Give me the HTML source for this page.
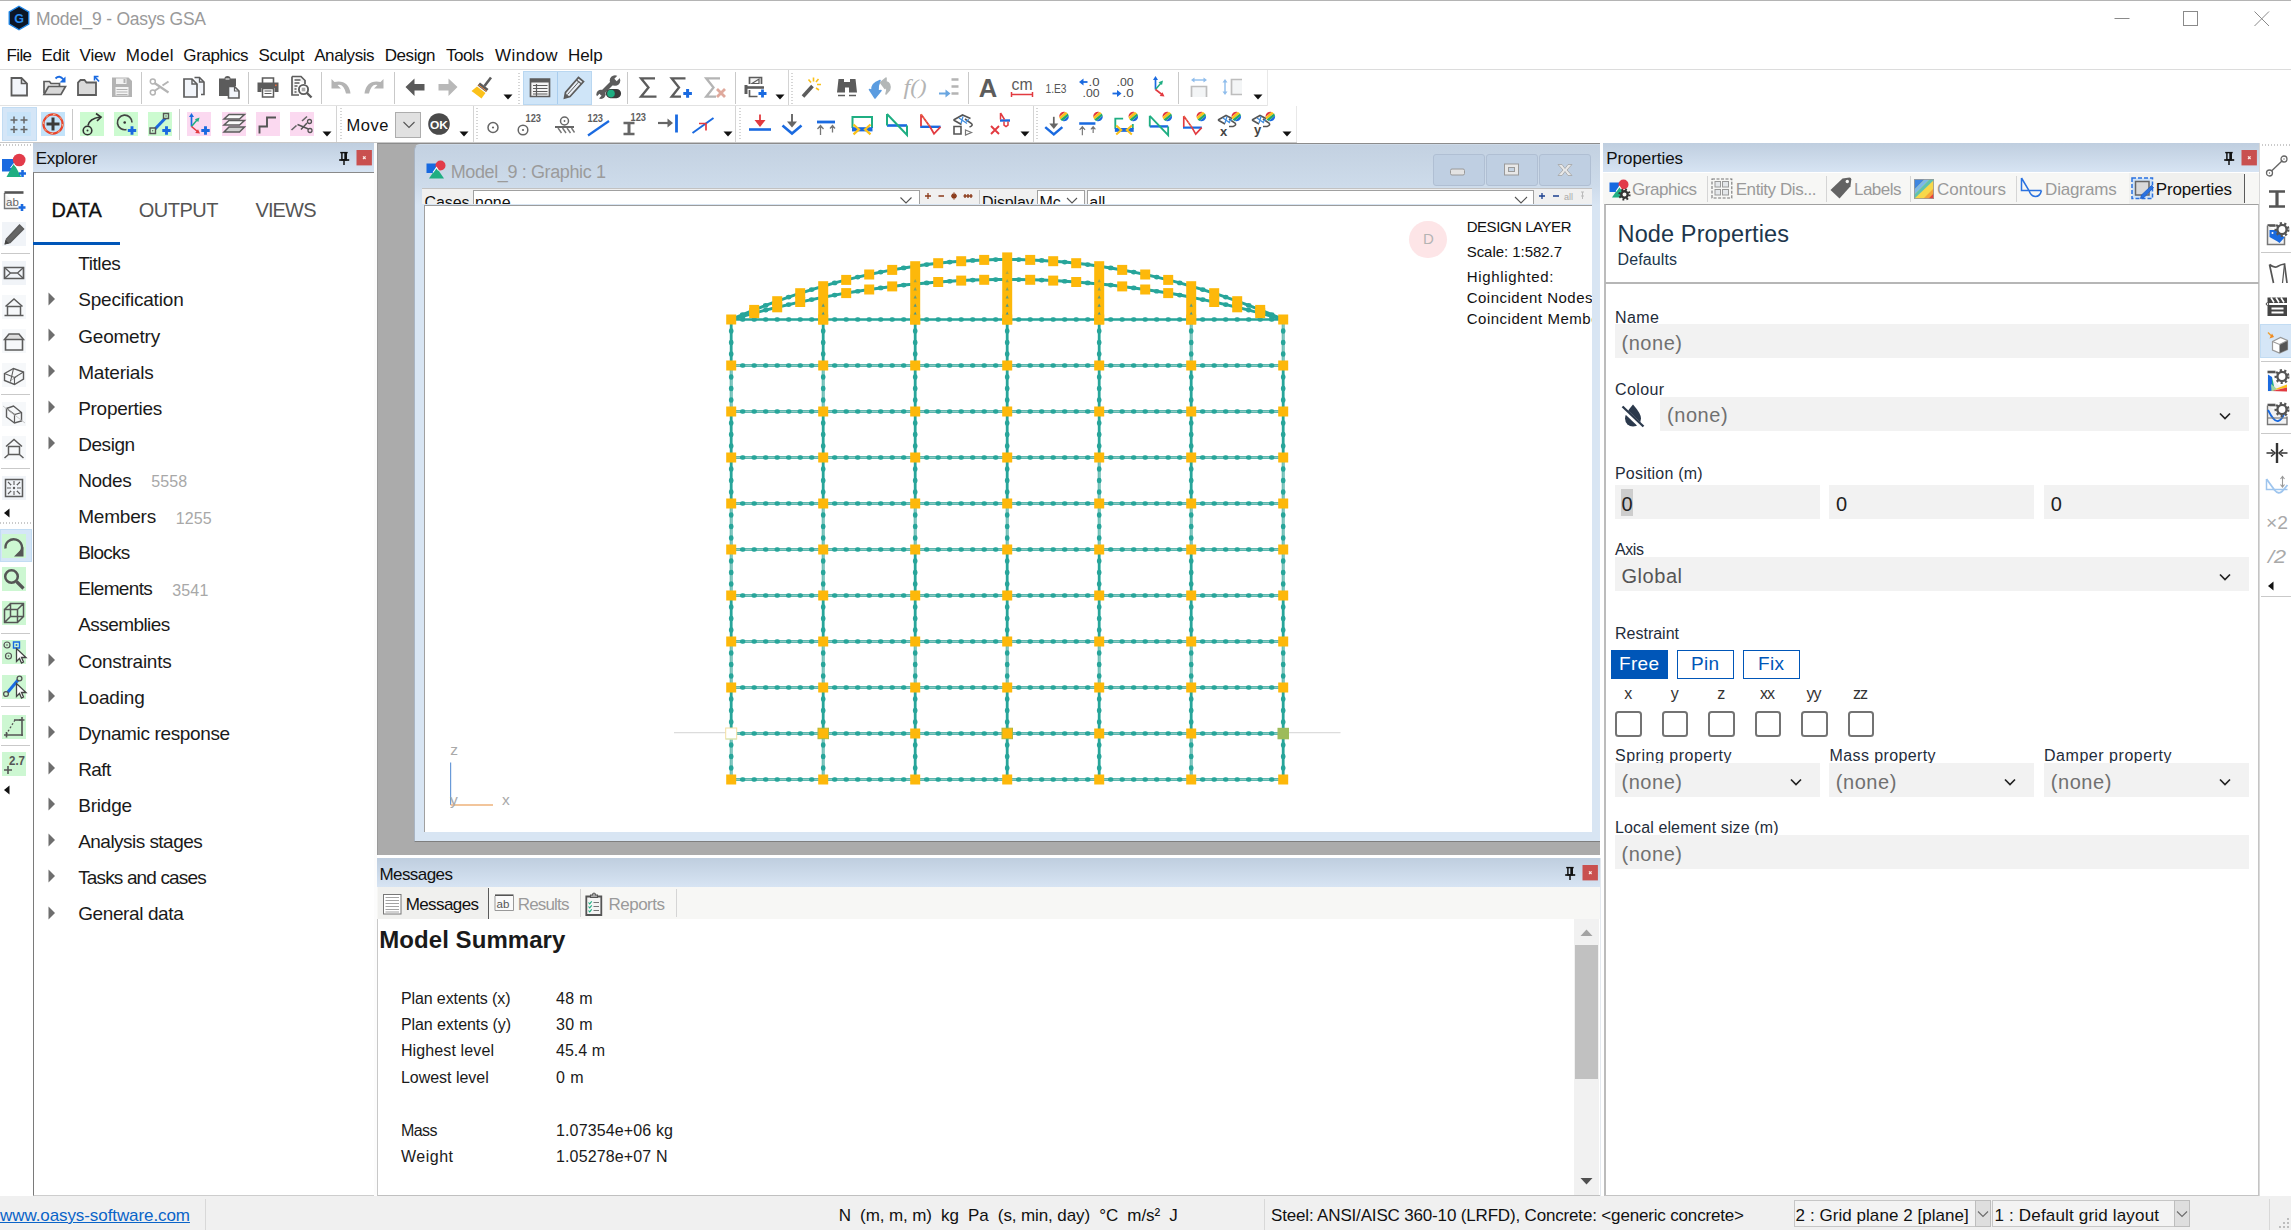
<!DOCTYPE html>
<html><head><meta charset="utf-8"><title>Model_9 - Oasys GSA</title>
<style>
html,body{margin:0;padding:0;background:#fff;}
body{width:2291px;height:1230px;position:relative;overflow:hidden;font-family:"Liberation Sans",sans-serif;}
body div{position:absolute;box-sizing:border-box;}
.t{position:absolute;white-space:pre;line-height:1;}
svg{position:absolute;overflow:visible;}
</style></head><body>
<div style="left:0px;top:0px;width:2291px;height:1px;background:#b4b4b4;"></div>
<span class="t " style="left:36.00px;top:11.00px;font-size:17.5px;color:#9a9a9a;letter-spacing:-0.227px;">Model_9 - Oasys GSA</span>
<svg style="left:2100px;top:0" width="191" height="40"><path d="M14.5 18.5H29.5" stroke="#8a8a8a" fill="none"/><rect x="83.5" y="11.5" width="14" height="14" stroke="#8a8a8a" fill="none"/><path d="M154.5 11.5L169 26M169 11.5L154.5 26" stroke="#8a8a8a" fill="none"/></svg>
<span class="t " style="left:6.60px;top:47.00px;font-size:17px;color:#111;letter-spacing:-0.664px;">File</span>
<span class="t " style="left:41.50px;top:47.00px;font-size:17px;color:#111;letter-spacing:-0.331px;">Edit</span>
<span class="t " style="left:79.60px;top:47.00px;font-size:17px;color:#111;letter-spacing:-0.180px;">View</span>
<span class="t " style="left:125.70px;top:47.00px;font-size:17px;color:#111;letter-spacing:0.375px;">Model</span>
<span class="t " style="left:183.30px;top:47.00px;font-size:17px;color:#111;letter-spacing:-0.389px;">Graphics</span>
<span class="t " style="left:258.40px;top:47.00px;font-size:17px;color:#111;letter-spacing:-0.229px;">Sculpt</span>
<span class="t " style="left:314.20px;top:47.00px;font-size:17px;color:#111;letter-spacing:-0.414px;">Analysis</span>
<span class="t " style="left:384.80px;top:47.00px;font-size:17px;color:#111;letter-spacing:-0.463px;">Design</span>
<span class="t " style="left:445.90px;top:47.00px;font-size:17px;color:#111;letter-spacing:-0.396px;">Tools</span>
<span class="t " style="left:495.00px;top:47.00px;font-size:17px;color:#111;letter-spacing:0.428px;">Window</span>
<span class="t " style="left:568.00px;top:47.00px;font-size:17px;color:#111;letter-spacing:-0.121px;">Help</span>
<div style="left:0px;top:69px;width:2291px;height:1px;background:#dcdcdc;"></div>
<div style="left:0px;top:105px;width:1267px;height:1px;background:#e2e2e2;"></div>
<div style="left:1267px;top:70px;width:1px;height:36px;background:#e8e8e8;"></div>
<div style="left:1296px;top:106px;width:1px;height:36px;background:#e8e8e8;"></div>
<div style="left:0px;top:142px;width:1297px;height:1px;background:#c8c8c8;"></div>
<div style="left:33px;top:143px;width:341px;height:29px;background:linear-gradient(#bfcedf,#d7e4f3);"></div>
<div style="left:33px;top:172px;width:341px;height:1024px;background:#fff;border-left:1px solid #7a7a7a;border-top:1px solid #8a8a8a;border-bottom:1px solid #cdcdcd;"></div>
<div style="left:374px;top:143px;width:3px;height:1053px;background:#fcfcfc;"></div>
<span class="t " style="left:35.70px;top:150.00px;font-size:17px;color:#111;letter-spacing:-0.243px;">Explorer</span>
<svg style="left:340.5px;top:150px" width="32" height="17" overflow="visible"><g transform="translate(-1.800,0.800)"><path d="M1 1.800h7.500" stroke="#111" stroke-width="1.400" fill="none"/><path d="M2.700 2v7h4.300V2" stroke="#111" stroke-width="1.500" fill="none"/><path d="M6.200 2v7" stroke="#111" stroke-width="2.200"/><path d="M0 9.200h10" stroke="#111" stroke-width="1.700"/><path d="M4.800 9.500v4.800" stroke="#111" stroke-width="1.500"/></g><rect x="15.500" y="0" width="15.400" height="15.400" fill="#c9504f"/><path d="M22 6.400l2.600 2.600M24.600 6.400l-2.600 2.600" stroke="#fbe9e4" stroke-width="1.200"/></svg>
<span class="t " style="left:51.50px;top:200.00px;font-size:20px;color:#111;letter-spacing:-0.024px;-webkit-text-stroke:0.3px #111;">DATA</span>
<span class="t " style="left:138.70px;top:200.00px;font-size:20px;color:#555;letter-spacing:-0.503px;">OUTPUT</span>
<span class="t " style="left:255.40px;top:200.00px;font-size:20px;color:#555;letter-spacing:-0.839px;">VIEWS</span>
<div style="left:33px;top:241.5px;width:87px;height:3.7px;background:#0056b8;"></div>
<span class="t " style="left:78.20px;top:254.00px;font-size:19px;color:#1a1a1a;letter-spacing:-0.418px;">Titles</span>
<span class="t " style="left:78.20px;top:290.00px;font-size:19px;color:#1a1a1a;letter-spacing:-0.185px;">Specification</span>
<svg style="left:47.500px;top:291.6px" width="8" height="14"><path d="M0.500 0.500L7 7L0.500 13.500Z" fill="#6e6e6e"/></svg>
<span class="t " style="left:78.20px;top:327.00px;font-size:19px;color:#1a1a1a;letter-spacing:-0.201px;">Geometry</span>
<svg style="left:47.500px;top:327.7px" width="8" height="14"><path d="M0.500 0.500L7 7L0.500 13.500Z" fill="#6e6e6e"/></svg>
<span class="t " style="left:78.20px;top:363.00px;font-size:19px;color:#1a1a1a;letter-spacing:-0.196px;">Materials</span>
<svg style="left:47.500px;top:363.8px" width="8" height="14"><path d="M0.500 0.500L7 7L0.500 13.500Z" fill="#6e6e6e"/></svg>
<span class="t " style="left:78.20px;top:399.00px;font-size:19px;color:#1a1a1a;letter-spacing:-0.288px;">Properties</span>
<svg style="left:47.500px;top:399.9px" width="8" height="14"><path d="M0.500 0.500L7 7L0.500 13.500Z" fill="#6e6e6e"/></svg>
<span class="t " style="left:78.20px;top:435.00px;font-size:19px;color:#1a1a1a;letter-spacing:-0.428px;">Design</span>
<svg style="left:47.500px;top:436.1px" width="8" height="14"><path d="M0.500 0.500L7 7L0.500 13.500Z" fill="#6e6e6e"/></svg>
<span class="t " style="left:78.20px;top:471.00px;font-size:19px;color:#1a1a1a;letter-spacing:-0.355px;">Nodes</span>
<span class="t " style="left:151.20px;top:474.00px;font-size:16px;color:#a8a8a8;letter-spacing:0.137px;">5558</span>
<span class="t " style="left:78.20px;top:507.00px;font-size:19px;color:#1a1a1a;letter-spacing:-0.196px;">Members</span>
<span class="t " style="left:175.70px;top:511.00px;font-size:16px;color:#a8a8a8;letter-spacing:0.137px;">1255</span>
<span class="t " style="left:78.20px;top:543.00px;font-size:19px;color:#1a1a1a;letter-spacing:-0.792px;">Blocks</span>
<span class="t " style="left:78.20px;top:579.00px;font-size:19px;color:#1a1a1a;letter-spacing:-0.657px;">Elements</span>
<span class="t " style="left:172.30px;top:583.00px;font-size:16px;color:#a8a8a8;letter-spacing:0.137px;">3541</span>
<span class="t " style="left:78.20px;top:615.00px;font-size:19px;color:#1a1a1a;letter-spacing:-0.571px;">Assemblies</span>
<span class="t " style="left:78.20px;top:652.00px;font-size:19px;color:#1a1a1a;letter-spacing:-0.259px;">Constraints</span>
<svg style="left:47.500px;top:652.7px" width="8" height="14"><path d="M0.500 0.500L7 7L0.500 13.500Z" fill="#6e6e6e"/></svg>
<span class="t " style="left:78.20px;top:688.00px;font-size:19px;color:#1a1a1a;letter-spacing:-0.186px;">Loading</span>
<svg style="left:47.500px;top:688.8px" width="8" height="14"><path d="M0.500 0.500L7 7L0.500 13.500Z" fill="#6e6e6e"/></svg>
<span class="t " style="left:78.20px;top:724.00px;font-size:19px;color:#1a1a1a;letter-spacing:-0.356px;">Dynamic response</span>
<svg style="left:47.500px;top:724.9px" width="8" height="14"><path d="M0.500 0.500L7 7L0.500 13.500Z" fill="#6e6e6e"/></svg>
<span class="t " style="left:78.20px;top:760.00px;font-size:19px;color:#1a1a1a;letter-spacing:-0.615px;">Raft</span>
<svg style="left:47.500px;top:761.0px" width="8" height="14"><path d="M0.500 0.500L7 7L0.500 13.500Z" fill="#6e6e6e"/></svg>
<span class="t " style="left:78.20px;top:796.00px;font-size:19px;color:#1a1a1a;letter-spacing:-0.184px;">Bridge</span>
<svg style="left:47.500px;top:797.2px" width="8" height="14"><path d="M0.500 0.500L7 7L0.500 13.500Z" fill="#6e6e6e"/></svg>
<span class="t " style="left:78.20px;top:832.00px;font-size:19px;color:#1a1a1a;letter-spacing:-0.536px;">Analysis stages</span>
<svg style="left:47.500px;top:833.3px" width="8" height="14"><path d="M0.500 0.500L7 7L0.500 13.500Z" fill="#6e6e6e"/></svg>
<span class="t " style="left:78.20px;top:868.00px;font-size:19px;color:#1a1a1a;letter-spacing:-0.854px;">Tasks and cases</span>
<svg style="left:47.500px;top:869.4px" width="8" height="14"><path d="M0.500 0.500L7 7L0.500 13.500Z" fill="#6e6e6e"/></svg>
<span class="t " style="left:78.20px;top:904.00px;font-size:19px;color:#1a1a1a;letter-spacing:-0.395px;">General data</span>
<svg style="left:47.500px;top:905.5px" width="8" height="14"><path d="M0.500 0.500L7 7L0.500 13.500Z" fill="#6e6e6e"/></svg>
<div style="left:0px;top:1196px;width:2291px;height:34px;background:#f0f0f0;"></div>
<span class="t " style="left:0.00px;top:1207.00px;font-size:17px;color:#0a64c8;letter-spacing:-0.084px;text-decoration:underline;">www.oasys-software.com</span>
<div style="left:205px;top:1199px;width:1px;height:31px;background:#d8d8d8;"></div>
<span class="t " style="left:838.70px;top:1207.00px;font-size:17px;color:#111;letter-spacing:-0.106px;">N  (m, m, m)  kg  Pa  (s, min, day)  °C  m/s²  J</span>
<div style="left:1264px;top:1199px;width:1px;height:31px;background:#d8d8d8;"></div>
<span class="t " style="left:1271.00px;top:1207.00px;font-size:17px;color:#111;letter-spacing:-0.166px;">Steel: ANSI/AISC 360-10 (LRFD), Concrete: &lt;generic concrete&gt;</span>
<div style="left:1793.8px;top:1200.2px;width:197.70000000000005px;height:27.200000000000045px;background:#f3f3f3;border:1px solid #c6c6c6;"></div>
<div style="left:1975.2px;top:1200.2px;width:16.299999999999955px;height:27.200000000000045px;background:#dedede;border:1px solid #bdbdbd;"></div>
<span class="t " style="left:1795.60px;top:1207.00px;font-size:17px;color:#111;letter-spacing:0.053px;">2 : Grid plane 2 [plane]</span>
<svg style="left:1977.3px;top:1209.8px" width="12" height="8"><path d="M1 1.500L6 6.500L11 1.500" stroke="#6a6a6a" fill="none" stroke-width="1.100"/></svg>
<div style="left:1991.5px;top:1200.2px;width:198.30000000000018px;height:27.200000000000045px;background:#f3f3f3;border:1px solid #c6c6c6;"></div>
<div style="left:2173.7px;top:1200.2px;width:16.100000000000364px;height:27.200000000000045px;background:#dedede;border:1px solid #bdbdbd;"></div>
<span class="t " style="left:1994.50px;top:1207.00px;font-size:17px;color:#111;letter-spacing:0.176px;">1 : Default grid layout</span>
<svg style="left:2175.8px;top:1209.8px" width="12" height="8"><path d="M1 1.500L6 6.500L11 1.500" stroke="#6a6a6a" fill="none" stroke-width="1.100"/></svg>
<div style="left:2269px;top:1199px;width:1px;height:31px;background:#d8d8d8;"></div>
<svg style="left:2279px;top:1218px" width="12" height="12"><g fill="#bdbdbd"><rect x="8" y="0" width="2" height="2"/><rect x="4" y="4" width="2" height="2"/><rect x="8" y="4" width="2" height="2"/><rect x="0" y="8" width="2" height="2"/><rect x="4" y="8" width="2" height="2"/><rect x="8" y="8" width="2" height="2"/></g></svg>
<div style="left:377px;top:143px;width:1223px;height:712px;background:#ababab;border-top:1px solid #8c8c8c;border-left:1px solid #9a9a9a;overflow:hidden;"><div style="left:35.500px;top:0px;width:1200px;height:698px;background:linear-gradient(#c3d1e1 0px,#cddbea 40px,#d8e5f3 60px,#d8e5f3);border:1px solid #a9b4c2;border-top-color:#cdd9e6;border-bottom-color:#7e7e7e;border-radius:6px 6px 0 0;"></div></div>
<span class="t " style="left:450.70px;top:163.00px;font-size:18px;color:#9b9b9b;letter-spacing:-0.376px;">Model_9 : Graphic 1</span>
<div style="left:1432.5px;top:154px;width:52px;height:31.5px;background:#bfcfe2;border:1px solid #b0bfd3;border-radius:3px;"></div>
<div style="left:1485.7px;top:154px;width:52px;height:31.5px;background:#bfcfe2;border:1px solid #b0bfd3;border-radius:3px;"></div>
<div style="left:1539px;top:154px;width:52px;height:31.5px;background:#bfcfe2;border:1px solid #b0bfd3;border-radius:3px;"></div>
<svg style="left:1432px;top:154px" width="160" height="32"><rect x="18.5" y="15" width="14" height="6" rx="1.5" fill="#e3e3e3" stroke="#9a9a9a"/><rect x="72.5" y="10" width="14" height="11" fill="#e8e8e8" stroke="#9a9a9a"/><rect x="76.500" y="13.5" width="6" height="4" fill="#c5d3e2" stroke="#9a9a9a"/><path d="M126 10.500h4l3 4l3-4h4l-5 5.5l5 5.500h-4l-3-4l-3 4h-4l5-5.500z" fill="#e8e8e8" stroke="#a5a5a5" stroke-width="0.8"/></svg>
<div style="left:422px;top:188px;width:1170px;height:16px;background:#f0f0f0;overflow:hidden;border-top:1px solid #c2c2c2;"><span class="t" style="left:2.500px;top:5.700px;font-size:16px;color:#111;letter-spacing:-0.100px;">Cases</span><div style="left:51px;top:1px;width:447px;height:20px;background:#fff;border:1px solid #a0a0a0;"></div><span class="t" style="left:53px;top:5.700px;font-size:16px;color:#111;">none</span><div style="left:556.500px;top:1px;width:1px;height:14px;background:#c4c4c4;"></div><span class="t" style="left:560px;top:5.700px;font-size:16px;color:#111;letter-spacing:-0.100px;">Display</span><div style="left:615.300px;top:1px;width:47.400px;height:20px;background:#fff;border:1px solid #a0a0a0;"></div><span class="t" style="left:617.500px;top:5.700px;font-size:16px;color:#111;">Mc</span><div style="left:664.600px;top:1px;width:447px;height:20px;background:#fff;border:1px solid #a0a0a0;"></div><span class="t" style="left:667.300px;top:5.700px;font-size:16px;color:#111;">all</span></div>
<svg style="left:422px;top:188px" width="1170" height="16"><g fill="none" stroke="#555" stroke-width="1.1"><path d="M478.500 9.500l5.500 5.500l5.500-5.500"/><path d="M645 10l5 5l5-5"/><path d="M1093 9l6 6l6-6"/></g><g stroke="#8a3a1a" stroke-width="1.3" fill="none"><path d="M503 8h6M506 5v6M516.500 8h5.500M529 8h6M532 4.500v7M530 6l4 4M534 6l-4 4M541.500 8h9M543 6v4M546 6v4M549 6v4"/></g><g stroke="#1b3f8f" stroke-width="1.3" fill="none"><path d="M1117 8h6M1120 5v6M1131 8h6"/></g><text x="1142" y="11.5" font-size="9" fill="#aaa" font-family="Liberation Sans, sans-serif">all</text><path d="M1159 4h3M1160.500 4v4M1159 8h3M1160.500 8v3" stroke="#bbb" fill="none"/></svg>
<div style="left:423.5px;top:204.5px;width:1168px;height:627px;background:#fff;border-top:1.500px solid #9c9c9c;border-left:1.500px solid #a0a0a0;"></div>
<div style="left:1409.3px;top:220.7px;width:37.5px;height:37.5px;background:#fde5e7;border-radius:50%;"></div>
<span class="t " style="left:1423.00px;top:231.00px;font-size:15px;color:#b4b4b4;">D</span>
<div style="left:1460px;top:210px;width:131.500px;height:125px;overflow:hidden;">
<span class="t " style="left:6.70px;top:9.00px;font-size:15px;color:#111;letter-spacing:-0.450px;">DESIGN LAYER</span>
<span class="t " style="left:6.70px;top:34.00px;font-size:15px;color:#111;letter-spacing:-0.046px;">Scale: 1:582.7</span>
<span class="t " style="left:6.70px;top:59.00px;font-size:15px;color:#111;letter-spacing:0.690px;">Highlighted:</span>
<span class="t " style="left:6.70px;top:80.00px;font-size:15px;color:#111;letter-spacing:0.494px;">Coincident Nodes</span>
<span class="t " style="left:6.70px;top:101.00px;font-size:15px;color:#111;letter-spacing:0.515px;">Coincident Members</span>
</div>
<div style="left:377px;top:858px;width:1223px;height:29px;background:linear-gradient(#bfcedf,#d7e4f3);"></div>
<span class="t " style="left:379.40px;top:866.00px;font-size:17px;color:#111;letter-spacing:-0.554px;">Messages</span>
<svg style="left:1567.2px;top:865.3px" width="32" height="17" overflow="visible"><g transform="translate(-1.800,0.800)"><path d="M1 1.800h7.500" stroke="#111" stroke-width="1.400" fill="none"/><path d="M2.700 2v7h4.300V2" stroke="#111" stroke-width="1.500" fill="none"/><path d="M6.200 2v7" stroke="#111" stroke-width="2.200"/><path d="M0 9.200h10" stroke="#111" stroke-width="1.700"/><path d="M4.800 9.500v4.800" stroke="#111" stroke-width="1.500"/></g><rect x="15.500" y="0" width="15.400" height="15.400" fill="#c9504f"/><path d="M22 6.400l2.600 2.600M24.600 6.400l-2.600 2.600" stroke="#fbe9e4" stroke-width="1.200"/></svg>
<div style="left:377px;top:887px;width:1223px;height:32px;background:#f7f7f5;"></div>
<div style="left:378px;top:887px;width:110px;height:32px;background:#f0f0ee;"></div>
<div style="left:488px;top:888px;width:1px;height:31px;background:#5a5a5a;"></div>
<div style="left:579.6px;top:889px;width:1px;height:28px;background:#d5d5d5;"></div>
<div style="left:675.5px;top:889px;width:1px;height:28px;background:#d5d5d5;"></div>
<span class="t " style="left:405.70px;top:896.00px;font-size:17px;color:#111;letter-spacing:-0.596px;">Messages</span>
<span class="t " style="left:517.70px;top:896.00px;font-size:17px;color:#9a9a9a;letter-spacing:-0.814px;">Results</span>
<span class="t " style="left:608.50px;top:896.00px;font-size:17px;color:#9a9a9a;letter-spacing:-0.504px;">Reports</span>
<div style="left:377px;top:919px;width:1223px;height:277px;background:#fff;border-left:1px solid #c8c8c8;border-bottom:1px solid #c0c0c0;"></div>
<div style="left:1600px;top:858px;width:1px;height:338px;background:#e4e9ef;"></div>
<div style="left:1574px;top:919px;width:24.5px;height:276px;background:#f1f1f1;"></div>
<div style="left:1575px;top:944.5px;width:22.5px;height:134.5px;background:#c1c1c1;"></div>
<svg style="left:1574px;top:919px" width="25" height="276"><path d="M6.500 17L12.500 10.500L18.500 17Z" fill="#a3a3a3"/><path d="M6.500 259L12.500 265.500L18.500 259Z" fill="#505050"/></svg>
<span class="t " style="left:379.30px;top:928.00px;font-size:24px;color:#1a1a1a;letter-spacing:0.052px;font-weight:bold;">Model Summary</span>
<span class="t " style="left:400.90px;top:991.00px;font-size:16px;color:#1a1a1a;letter-spacing:-0.103px;">Plan extents (x)</span>
<span class="t " style="left:556.00px;top:991.00px;font-size:16px;color:#1a1a1a;letter-spacing:0.311px;">48 m</span>
<span class="t " style="left:400.90px;top:1017.00px;font-size:16px;color:#1a1a1a;letter-spacing:-0.070px;">Plan extents (y)</span>
<span class="t " style="left:556.00px;top:1017.00px;font-size:16px;color:#1a1a1a;letter-spacing:0.311px;">30 m</span>
<span class="t " style="left:400.90px;top:1043.00px;font-size:16px;color:#1a1a1a;letter-spacing:0.125px;">Highest level</span>
<span class="t " style="left:556.00px;top:1043.00px;font-size:16px;color:#1a1a1a;letter-spacing:0.018px;">45.4 m</span>
<span class="t " style="left:400.90px;top:1070.00px;font-size:16px;color:#1a1a1a;letter-spacing:-0.022px;">Lowest level</span>
<span class="t " style="left:556.00px;top:1070.00px;font-size:16px;color:#1a1a1a;letter-spacing:0.415px;">0 m</span>
<span class="t " style="left:400.90px;top:1123.00px;font-size:16px;color:#1a1a1a;letter-spacing:-0.542px;">Mass</span>
<span class="t " style="left:556.00px;top:1123.00px;font-size:16px;color:#1a1a1a;letter-spacing:0.138px;">1.07354e+06 kg</span>
<span class="t " style="left:400.90px;top:1149.00px;font-size:16px;color:#1a1a1a;letter-spacing:0.519px;">Weight</span>
<span class="t " style="left:556.00px;top:1149.00px;font-size:16px;color:#1a1a1a;letter-spacing:0.136px;">1.05278e+07 N</span>
<div style="left:1603px;top:143px;width:656px;height:28.5px;background:linear-gradient(#bfcedf,#d7e4f3);"></div>
<span class="t " style="left:1606.30px;top:150.00px;font-size:17px;color:#111;letter-spacing:-0.086px;">Properties</span>
<svg style="left:2226px;top:150px" width="32" height="17" overflow="visible"><g transform="translate(-1.800,0.800)"><path d="M1 1.800h7.500" stroke="#111" stroke-width="1.400" fill="none"/><path d="M2.700 2v7h4.300V2" stroke="#111" stroke-width="1.500" fill="none"/><path d="M6.200 2v7" stroke="#111" stroke-width="2.200"/><path d="M0 9.200h10" stroke="#111" stroke-width="1.700"/><path d="M4.800 9.500v4.800" stroke="#111" stroke-width="1.500"/></g><rect x="15.500" y="0" width="15.400" height="15.400" fill="#c9504f"/><path d="M22 6.400l2.600 2.600M24.600 6.400l-2.600 2.600" stroke="#fbe9e4" stroke-width="1.200"/></svg>
<div style="left:1603px;top:173px;width:656px;height:31px;background:#f7f7f5;"></div>
<div style="left:2128.5px;top:173px;width:115.5px;height:31px;background:#f0f0ee;"></div>
<div style="left:2244px;top:174px;width:1px;height:29px;background:#5a5a5a;"></div>
<div style="left:1707px;top:176px;width:1px;height:26px;background:#d5d5d5;"></div>
<div style="left:1826px;top:176px;width:1px;height:26px;background:#d5d5d5;"></div>
<div style="left:1909.6px;top:176px;width:1px;height:26px;background:#d5d5d5;"></div>
<div style="left:2016px;top:176px;width:1px;height:26px;background:#d5d5d5;"></div>
<span class="t " style="left:1632.00px;top:181.00px;font-size:17px;color:#9a9a9a;letter-spacing:-0.432px;">Graphics</span>
<span class="t " style="left:1735.70px;top:181.00px;font-size:17px;color:#9a9a9a;letter-spacing:-0.422px;">Entity Dis...</span>
<span class="t " style="left:1854.00px;top:181.00px;font-size:17px;color:#9a9a9a;letter-spacing:-0.518px;">Labels</span>
<span class="t " style="left:1937.00px;top:181.00px;font-size:17px;color:#9a9a9a;letter-spacing:0.004px;">Contours</span>
<span class="t " style="left:2045.00px;top:181.00px;font-size:17px;color:#9a9a9a;letter-spacing:-0.148px;">Diagrams</span>
<span class="t " style="left:2155.70px;top:181.00px;font-size:17px;color:#111;letter-spacing:-0.131px;">Properties</span>
<div style="left:1603.5px;top:204px;width:655.5px;height:991.5px;background:#fff;border:1px solid #c4c4c4;border-left:2px solid #bcbcbc;border-top:1.500px solid #a0a0a0;"></div>
<div style="left:1604.5px;top:282px;width:654px;height:1.7px;background:#b6b6b6;"></div>
<span class="t " style="left:1617.60px;top:223.00px;font-size:23.5px;color:#20364c;letter-spacing:0.114px;">Node Properties</span>
<span class="t " style="left:1617.60px;top:252.00px;font-size:16px;color:#20364c;letter-spacing:0.101px;">Defaults</span>
<span class="t " style="left:1615.00px;top:310.00px;font-size:16px;color:#1f2d3b;letter-spacing:0.441px;">Name</span>
<div style="left:1614.7px;top:324.4px;width:634.3px;height:34.10000000000002px;background:#f2f2f2;"></div>
<span class="t " style="left:1621.50px;top:333.00px;font-size:20px;color:#707070;letter-spacing:0.539px;">(none)</span>
<span class="t " style="left:1615.00px;top:382.00px;font-size:16px;color:#1f2d3b;letter-spacing:0.374px;">Colour</span>
<div style="left:1660px;top:396.9px;width:589px;height:34.10000000000002px;background:#f2f2f2;"></div>
<span class="t " style="left:1667.00px;top:405.00px;font-size:20px;color:#707070;letter-spacing:0.559px;">(none)</span>
<svg style="left:2218px;top:411.4px" width="14" height="10"><path d="M2 2.500L7 7.500L12 2.500" stroke="#222" stroke-width="1.7" fill="none"/></svg>
<span class="t " style="left:1615.00px;top:466.00px;font-size:16px;color:#1f2d3b;letter-spacing:0.196px;">Position (m)</span>
<div style="left:1614.7px;top:485.3px;width:205.29999999999995px;height:33.49999999999994px;background:#f2f2f2;"></div>
<div style="left:1829px;top:485.3px;width:205px;height:33.49999999999994px;background:#f2f2f2;"></div>
<div style="left:2044px;top:485.3px;width:205px;height:33.49999999999994px;background:#f2f2f2;"></div>
<div style="left:1620.9px;top:488.5px;width:11.8px;height:27.5px;background:#cdcdcd;"></div>
<span class="t " style="left:1621.50px;top:494.00px;font-size:20px;color:#222;">0</span>
<span class="t " style="left:1836.00px;top:494.00px;font-size:20px;color:#222;">0</span>
<span class="t " style="left:2050.70px;top:494.00px;font-size:20px;color:#222;">0</span>
<span class="t " style="left:1615.00px;top:542.00px;font-size:16px;color:#1f2d3b;letter-spacing:-0.409px;">Axis</span>
<div style="left:1614.7px;top:557.4px;width:634.3px;height:34.10000000000002px;background:#f2f2f2;"></div>
<span class="t " style="left:1621.50px;top:566.00px;font-size:20px;color:#555;letter-spacing:0.538px;">Global</span>
<svg style="left:2218px;top:572px" width="14" height="10"><path d="M2 2.500L7 7.500L12 2.500" stroke="#222" stroke-width="1.7" fill="none"/></svg>
<span class="t " style="left:1615.00px;top:626.00px;font-size:16px;color:#1f2d3b;letter-spacing:-0.002px;">Restraint</span>
<div style="left:1611px;top:650px;width:57px;height:29px;background:#0056b8;"></div>
<span class="t " style="left:1619.00px;top:654.00px;font-size:19px;color:#fff;letter-spacing:0.312px;">Free</span>
<div style="left:1676.8px;top:650px;width:57.5px;height:29px;background:#fff;border:1.500px solid #0056b8;"></div>
<span class="t " style="left:1691.00px;top:654.00px;font-size:19px;color:#0056b8;letter-spacing:0.270px;">Pin</span>
<div style="left:1742.8px;top:650px;width:57.5px;height:29px;background:#fff;border:1.500px solid #0056b8;"></div>
<span class="t " style="left:1758.00px;top:654.00px;font-size:19px;color:#0056b8;letter-spacing:0.337px;">Fix</span>
<span class="t " style="left:1624.20px;top:686.00px;font-size:16px;color:#333;">x</span>
<div style="left:1615.4px;top:711px;width:26.5px;height:25.5px;border:2px solid #737373;border-radius:3.500px;background:#fff;"></div>
<span class="t " style="left:1670.70px;top:686.00px;font-size:16px;color:#333;">y</span>
<div style="left:1661.9px;top:711px;width:26.5px;height:25.5px;border:2px solid #737373;border-radius:3.500px;background:#fff;"></div>
<span class="t " style="left:1717.20px;top:686.00px;font-size:16px;color:#333;">z</span>
<div style="left:1708.4px;top:711px;width:26.5px;height:25.5px;border:2px solid #737373;border-radius:3.500px;background:#fff;"></div>
<span class="t " style="left:1759.90px;top:686.00px;font-size:16px;color:#333;letter-spacing:-0.800px;">xx</span>
<div style="left:1754.9px;top:711px;width:26.5px;height:25.5px;border:2px solid #737373;border-radius:3.500px;background:#fff;"></div>
<span class="t " style="left:1806.40px;top:686.00px;font-size:16px;color:#333;letter-spacing:-0.800px;">yy</span>
<div style="left:1801.4px;top:711px;width:26.5px;height:25.5px;border:2px solid #737373;border-radius:3.500px;background:#fff;"></div>
<span class="t " style="left:1852.90px;top:686.00px;font-size:16px;color:#333;letter-spacing:-0.800px;">zz</span>
<div style="left:1847.9px;top:711px;width:26.5px;height:25.5px;border:2px solid #737373;border-radius:3.500px;background:#fff;"></div>
<span class="t " style="left:1615.00px;top:748.00px;font-size:16px;color:#1f2d3b;letter-spacing:0.508px;">Spring property</span>
<span class="t " style="left:1829.60px;top:748.00px;font-size:16px;color:#1f2d3b;letter-spacing:0.378px;">Mass property</span>
<span class="t " style="left:2044.00px;top:748.00px;font-size:16px;color:#1f2d3b;letter-spacing:0.533px;">Damper property</span>
<div style="left:1614.7px;top:762.9px;width:205.29999999999995px;height:33.80000000000007px;background:#f2f2f2;"></div>
<span class="t " style="left:1621.50px;top:772.00px;font-size:20px;color:#707070;letter-spacing:0.539px;">(none)</span>
<svg style="left:1788.5px;top:776.7px" width="14" height="10"><path d="M2 2.500L7 7.500L12 2.500" stroke="#222" stroke-width="1.7" fill="none"/></svg>
<div style="left:1829px;top:762.9px;width:205px;height:33.80000000000007px;background:#f2f2f2;"></div>
<span class="t " style="left:1835.80px;top:772.00px;font-size:20px;color:#707070;letter-spacing:0.539px;">(none)</span>
<svg style="left:2003px;top:776.7px" width="14" height="10"><path d="M2 2.500L7 7.500L12 2.500" stroke="#222" stroke-width="1.7" fill="none"/></svg>
<div style="left:2044px;top:762.9px;width:205px;height:33.80000000000007px;background:#f2f2f2;"></div>
<span class="t " style="left:2050.80px;top:772.00px;font-size:20px;color:#707070;letter-spacing:0.539px;">(none)</span>
<svg style="left:2218px;top:776.7px" width="14" height="10"><path d="M2 2.500L7 7.500L12 2.500" stroke="#222" stroke-width="1.7" fill="none"/></svg>
<span class="t " style="left:1615.00px;top:820.00px;font-size:16px;color:#1f2d3b;letter-spacing:0.122px;">Local element size (m)</span>
<div style="left:1614.7px;top:835.4px;width:634.3px;height:34.10000000000002px;background:#f2f2f2;"></div>
<span class="t " style="left:1621.50px;top:844.00px;font-size:20px;color:#707070;letter-spacing:0.539px;">(none)</span>
<svg style="left:7.0px;top:75.0px" width="24" height="24" viewBox="0 0 24 24"><path d="M4.500 3h10l5.500 5.500V20.500H4.500z" stroke="#5c5c5c" stroke-width="1.8" fill="#f2f5fa" /><path d="M14.500 3v5.500h5.500" stroke="#5c5c5c" stroke-width="1.6" fill="none" /></svg>
<svg style="left:41.5px;top:75.0px" width="24" height="24" viewBox="0 0 24 24"><path d="M2 18.500V6.500h5.500l1.500 2h8.500v3" stroke="#5c5c5c" stroke-width="1.7" fill="#e6e6e6" /><path d="M2 19.500l4.500-8h17l-4.500 8z" stroke="#5c5c5c" stroke-width="1.7" fill="#d8d8d8" /><path d="M13.500 3.500q4-4 8 1" stroke="#1a6ae0" stroke-width="1.9" fill="none" /><path d="M23.500 1.500v6h-6z" fill="#1a6ae0" /></svg>
<svg style="left:76.6px;top:75.0px" width="24" height="24" viewBox="0 0 24 24"><path d="M1 20V7.500l2.500-2.500h4l2 2.500h9.500V20z" stroke="#5c5c5c" stroke-width="1.8" fill="#dadada" /><path d="M22 6.500l-4-4.500" stroke="#1a6ae0" stroke-width="1.7" fill="none" /><path d="M17.500 5.500v-4h4" stroke="#1a6ae0" stroke-width="1.5" fill="none" /></svg>
<svg style="left:109.6px;top:75.0px" width="24" height="24" viewBox="0 0 24 24"><path d="M2 2.500h16.500l3.500 3.500V22H2z" fill="#b3b3b3" /><rect x="6" y="3.5" width="10.5" height="5.5" fill="#f2f2f2" /><rect x="13.5" y="4" width="2" height="4" fill="#b3b3b3" /><rect x="5.5" y="12" width="13" height="8.5" fill="#f4f4f4" /><path d="M6.500 14.500h11M6.500 17h11M6.500 19.500h11" stroke="#b3b3b3" stroke-width="1.1" fill="none" /></svg>
<div style="left:140.5px;top:72px;width:1px;height:31.5px;background:#c9c9c9;"></div>
<svg style="left:147.5px;top:75.0px" width="24" height="24" viewBox="0 0 24 24"><path d="M6.500 8L20.500 17.500" stroke="#b4b4b4" stroke-width="2.2" fill="none" /><path d="M14.500 10.500L20.500 6.500M6.500 16L11.500 12.500" stroke="#b4b4b4" stroke-width="2" fill="none" /><circle cx="4.8" cy="6.5" r="2.5" stroke="#b4b4b4" stroke-width="1.5" fill="none"/><circle cx="4.8" cy="17.5" r="2.5" stroke="#b4b4b4" stroke-width="1.5" fill="none"/></svg>
<svg style="left:182.0px;top:75.0px" width="24" height="24" viewBox="0 0 24 24"><path d="M12.500 2.500h5l4.500 4.500v12.500h-3" stroke="#5c5c5c" stroke-width="1.6" fill="#f2f5fa" /><path d="M17.500 2.500v4.500h4.500" stroke="#5c5c5c" stroke-width="1.3" fill="none" /><path d="M2 4h8l5 5v13H2z" stroke="#5c5c5c" stroke-width="1.7" fill="#f2f5fa" /><path d="M10 4v5h5" stroke="#5c5c5c" stroke-width="1.4" fill="none" /></svg>
<svg style="left:216.5px;top:75.0px" width="24" height="24" viewBox="0 0 24 24"><path d="M2 3.500h5.500q0-2.500 3-2.500t3 2.500H19V11h-8v10H2z" fill="#5c5c5c" /><path d="M8.500 4h4" stroke="#eee" stroke-width="1.2" fill="none" /><path d="M11.500 11.500h6l4.500 4.500v7H11.500z" stroke="#5c5c5c" stroke-width="1.6" fill="#f2f5fa" /><path d="M17.500 11.500v4.500h4.500" stroke="#5c5c5c" stroke-width="1.2" fill="none" /></svg>
<div style="left:247.5px;top:72px;width:1px;height:31.5px;background:#c9c9c9;"></div>
<svg style="left:256.0px;top:75.0px" width="24" height="24" viewBox="0 0 24 24"><path d="M6 2.500h12v5H6z" fill="#fff" /><path d="M6.500 8V3h11v5" stroke="#5c5c5c" stroke-width="1.6" fill="none" /><path d="M1.500 7.500h21V17h-4v-4h-13v4h-4z" fill="#5c5c5c" /><rect x="19" y="9.5" width="1.6" height="1.6" fill="#e86a3a" /><path d="M6.500 13.500h11v8.500h-11z" stroke="#5c5c5c" stroke-width="1.5" fill="#fff" /><path d="M8.500 16h7M8.500 18.500h7" stroke="#5c5c5c" stroke-width="1.2" fill="none" /></svg>
<svg style="left:289.0px;top:75.0px" width="24" height="24" viewBox="0 0 24 24"><path d="M3 1.500h9l4 4V9M3 1.500v18.500h7" stroke="#5c5c5c" stroke-width="1.7" fill="#f2f2f2" /><path d="M5.500 5h6M5.500 8h5M5.500 11h3M5.500 14h2M5.500 17h2" stroke="#5c5c5c" stroke-width="1.6" fill="none" /><circle cx="14.5" cy="14.5" r="4.6" stroke="#5c5c5c" stroke-width="1.9" fill="#fff"/><rect x="12.7" y="12.7" width="3.6" height="3.6" fill="#aaa" /><path d="M18 18l4.500 4.500" stroke="#5c5c5c" stroke-width="2.4" fill="none" /></svg>
<div style="left:320.8px;top:72px;width:1px;height:31.5px;background:#c9c9c9;"></div>
<svg style="left:329.3px;top:75.0px" width="24" height="24" viewBox="0 0 24 24"><path d="M2.500 4v9.500h9.500l-3.500-3.500q6-2 8.500 8.500h4.500q-2-14-16-11.500z" fill="#b4b4b4" /></svg>
<svg style="left:362.3px;top:75.0px" width="24" height="24" viewBox="0 0 24 24"><path d="M21.500 4v9.500H12l3.500-3.500q-6-2-8.500 8.500H2.500q2-14 16-11.500z" fill="#b4b4b4" /></svg>
<div style="left:394px;top:72px;width:1px;height:31.5px;background:#c9c9c9;"></div>
<svg style="left:402.6px;top:75.0px" width="24" height="24" viewBox="0 0 24 24"><path d="M2.500 12L11.500 3.500V9H21.500v6.500H11.500V21z" fill="#5a5a5a" /></svg>
<svg style="left:435.6px;top:75.0px" width="24" height="24" viewBox="0 0 24 24"><path d="M21.500 12L12.500 3.500V9H2.500v6.500H12.500V21z" fill="#b8b8b8" /></svg>
<svg style="left:470.0px;top:75.0px" width="24" height="24" viewBox="0 0 24 24"><path d="M21 2.500L14.500 11" stroke="#5c5c5c" stroke-width="2.6" fill="none" /><path d="M10 7.500l8.500 6.500l-2.500 3l-8.500-6.500z" fill="#5c5c5c" /><path d="M7 11.500l8.500 6.500l-4 5.500l-10-7.500z" fill="#fbc11a" /><path d="M8.300 9.800l8.500 6.500" stroke="#f08a3a" stroke-width="1" fill="none" /></svg>
<svg style="left:502.8px;top:94px" width="10" height="6"><path d="M0.500 0.500h9L5 5.500z" fill="#111"/></svg>
<svg style="left:518px;top:73px" width="2" height="31"><path d="M1 0V31" stroke="#c4c4c4" stroke-width="1.400" stroke-dasharray="1 2"/></svg>
<div style="left:523.4px;top:70.7px;width:68.5px;height:34px;background:#cfe5f8;border:1px solid #b9d7f1;"></div>
<div style="left:557.2px;top:71.5px;width:1px;height:32.5px;background:#a9cdee;"></div>
<svg style="left:528.0px;top:75.0px" width="24" height="24" viewBox="0 0 24 24"><rect x="2.5" y="4" width="19" height="17.5" fill="#f4f4f4" /><path d="M2.500 4h19v17.500h-19z" stroke="#5c5c5c" stroke-width="1.7" fill="none" /><rect x="2.5" y="4" width="19" height="3.5" fill="#5c5c5c" /><path d="M5 10.500h14.500M5 13.500h14.500M5 16.500h14.500M5 19h14.500M8.500 9v12" stroke="#5c5c5c" stroke-width="1.2" fill="none" /></svg>
<svg style="left:562.4px;top:75.0px" width="24" height="24" viewBox="0 0 24 24"><path d="M16.500 2.500l5 4L8 21.500l-5.500 1.500l1-5.500z" stroke="#5c5c5c" stroke-width="1.7" fill="#e8eef5" /><path d="M14.500 5l5 4" stroke="#5c5c5c" stroke-width="1.3" fill="none" /><path d="M2.500 23l1-4.500l4 3z" fill="#5c5c5c" /><path d="M17 6.500L5.500 19.500" stroke="#5c5c5c" stroke-width="1" fill="none" /></svg>
<svg style="left:596.0px;top:75.0px" width="24" height="24" viewBox="0 0 24 24"><path d="M5 19L19 5" stroke="#5c5c5c" stroke-width="4.2" fill="none" /><circle cx="19" cy="5.5" r="5.3" stroke="#5c5c5c" stroke-width="0" fill="#5c5c5c"/><path d="M19.500 5L25 -0.500" stroke="#fff" stroke-width="3.4" fill="none" /><circle cx="5" cy="19.3" r="4.6" stroke="#5c5c5c" stroke-width="0" fill="#5c5c5c"/><path d="M4.500 19.800L-1 25.500" stroke="#fff" stroke-width="3" fill="none" /><path d="M14.500 14h6a4.600 4.600 0 0 1 0 9.200h-6a4.600 4.600 0 0 1 0-9.200z" fill="#3c3c3c" /><circle cx="15" cy="18.6" r="3.8" stroke="#1fae82" stroke-width="0" fill="#1fae82"/></svg>
<div style="left:627px;top:72px;width:1px;height:31.5px;background:#c9c9c9;"></div>
<svg style="left:635.0px;top:75.0px" width="24" height="24" viewBox="0 0 24 24"><path d="M20 3.300H6L13.500 12.500L6 21.700H21.500" stroke="#5c5c5c" stroke-width="2.3" fill="none" stroke-linejoin="miter"/></svg>
<svg style="left:667.0px;top:75.0px" width="24" height="24" viewBox="0 0 24 24"><path d="M18.500 3.300H4.700L12 12.500L4.700 21.700H14" stroke="#5c5c5c" stroke-width="2.3" fill="none" /><path d="M16.3 18.4H24.900000000000002M20.6 14.099999999999998V22.7" stroke="#1a6ae0" stroke-width="3" fill="none" /></svg>
<svg style="left:703.0px;top:75.0px" width="24" height="24" viewBox="0 0 24 24"><path d="M17 3.300H3.200L10.500 12.500L3.200 21.700H13" stroke="#b4b4b4" stroke-width="2.3" fill="none" /><path d="M14 14l8 8M22 14l-8 8" stroke="#dfa99c" stroke-width="2.8" fill="none" /></svg>
<div style="left:734.5px;top:72px;width:1px;height:31.5px;background:#c9c9c9;"></div>
<svg style="left:743.0px;top:75.0px" width="24" height="24" viewBox="0 0 24 24"><path d="M6.500 9V2.500h12V9" stroke="#5c5c5c" stroke-width="1.7" fill="#f4f4f4" /><path d="M9 8.500l7-4.500v4.500z" stroke="#5c5c5c" stroke-width="1.2" fill="none" /><path d="M1.500 10h3v9h-3z" fill="#5c5c5c" /><path d="M4 12.500h17" stroke="#5c5c5c" stroke-width="2.6" fill="none" /><path d="M6.500 15v6.500h8" stroke="#5c5c5c" stroke-width="1.7" fill="none" /><path d="M15.5 18.5H23.5M19.5 14.5V22.5" stroke="#1a6ae0" stroke-width="2.8" fill="none" /></svg>
<svg style="left:775px;top:94px" width="10" height="6"><path d="M0.500 0.500h9L5 5.500z" fill="#111"/></svg>
<div style="left:788px;top:70px;width:1px;height:35px;background:#d4d4d4;"></div>
<svg style="left:791px;top:73px" width="2" height="31"><path d="M1 0V31" stroke="#c4c4c4" stroke-width="1.400" stroke-dasharray="1 2"/></svg>
<svg style="left:799.5px;top:75.0px" width="24" height="24" viewBox="0 0 24 24"><path d="M3 21.500L12.500 11" stroke="#5c5c5c" stroke-width="3.6" fill="none" /><circle cx="13.8" cy="9.6" r="1.6" stroke="#fff" stroke-width="0" fill="#fff"/><path d="M13.500 2.500v4M18.500 4l-2.500 3M21 9.500h-4M19 15l-3-2M8.500 4.500l2.500 3" stroke="#fbc11a" stroke-width="1.6" fill="none" /></svg>
<svg style="left:834.7px;top:75.0px" width="24" height="24" viewBox="0 0 24 24"><path d="M3.500 4h5.500v3h6V4h5.500l1.500 13.500h-8v-5h-4v5h-8z" fill="#5c5c5c" /><path d="M3 20.500h7M14 20.500h7" stroke="#5c5c5c" stroke-width="1.6" fill="none" /></svg>
<svg style="left:868.0px;top:75.0px" width="24" height="24" viewBox="0 0 24 24"><path d="M12 5.500Q3 8.500 4 15.500L1.500 14.500L7 23L13 15.500L10 16Q9.500 11 12 5.500Z" fill="#5b9ce0" stroke="#5b9ce0" stroke-width="1.600" stroke-linejoin="round"/><path d="M12.500 7.500L18 3V6.500Q23.500 8.500 21.500 15L18 19Q20 12.500 17.500 11L17 13.500Z" fill="#b3b7b7" stroke="#b3b7b7" stroke-width="1.600" stroke-linejoin="round"/></svg>
<svg style="left:903.4px;top:75.0px" width="24" height="24" viewBox="0 0 24 24"><text x="0.5" y="19" font-size="21" fill="#b4b4b4" font-family="Liberation Serif, serif" font-style="italic" textLength="23" lengthAdjust="spacingAndGlyphs">f()</text></svg>
<svg style="left:937.0px;top:75.0px" width="24" height="24" viewBox="0 0 24 24"><path d="M14.500 4.500h7M14.500 11.500h7M14.500 18.500h7" stroke="#b4b4b4" stroke-width="2.6" fill="none" /><path d="M2 18.500h8" stroke="#6aa6e0" stroke-width="2" fill="none" /><path d="M8.500 14.500l5 4l-5 4z" fill="#6aa6e0" /></svg>
<div style="left:968px;top:72px;width:1px;height:31.5px;background:#c9c9c9;"></div>
<svg style="left:975.8px;top:75.0px" width="24" height="24" viewBox="0 0 24 24"><text x="2.7" y="22.3" font-size="25.5" fill="#5c5c5c" font-family="Liberation Sans, sans-serif" font-weight="bold" textLength="18.500" lengthAdjust="spacingAndGlyphs">A</text></svg>
<svg style="left:1010.0px;top:75.0px" width="24" height="24" viewBox="0 0 24 24"><text x="1.5" y="15" font-size="16.5" fill="#5c5c5c" font-family="Liberation Sans, sans-serif" textLength="21" lengthAdjust="spacingAndGlyphs">cm</text><path d="M1.500 19.500h21M1.500 17v5M22.500 17v5" stroke="#e23a40" stroke-width="1.5" fill="none" /></svg>
<svg style="left:1044.0px;top:75.0px" width="24" height="24" viewBox="0 0 24 24"><text x="1.5" y="17.5" font-size="13.5" fill="#555" font-family="Liberation Sans, sans-serif" textLength="21" lengthAdjust="spacingAndGlyphs">1.E3</text></svg>
<svg style="left:1077.6px;top:75.0px" width="24" height="24" viewBox="0 0 24 24"><text x="10.5" y="10.5" font-size="11.5" fill="#4a4a4a" font-family="Liberation Sans, sans-serif" textLength="11" lengthAdjust="spacingAndGlyphs">.0</text><text x="4.5" y="21.5" font-size="11.5" fill="#4a4a4a" font-family="Liberation Sans, sans-serif" textLength="17" lengthAdjust="spacingAndGlyphs">.00</text><path d="M9.500 7H3.500" stroke="#1a6ae0" stroke-width="1.8" fill="none" /><path d="M1 7l4.500-3.500v7z" fill="#1a6ae0" /></svg>
<svg style="left:1111.0px;top:75.0px" width="24" height="24" viewBox="0 0 24 24"><text x="5.5" y="10.5" font-size="11.5" fill="#4a4a4a" font-family="Liberation Sans, sans-serif" textLength="17" lengthAdjust="spacingAndGlyphs">.00</text><text x="11.5" y="21.5" font-size="11.5" fill="#4a4a4a" font-family="Liberation Sans, sans-serif" textLength="11" lengthAdjust="spacingAndGlyphs">.0</text><path d="M1.500 18.500H7" stroke="#1a6ae0" stroke-width="1.8" fill="none" /><path d="M10.500 18.500L6 15v7z" fill="#1a6ae0" /></svg>
<svg style="left:1147.0px;top:75.0px" width="24" height="24" viewBox="0 0 24 24"><path d="M8.500 14.500V3.500" stroke="#1a6ae0" stroke-width="1.7" fill="none" /><path d="M8.500 1l2.500 4h-5z" fill="#1a6ae0" /><path d="M8.500 14.500l5.500-6.500" stroke="#1fae82" stroke-width="1.5" fill="none" /><path d="M16 5.500l-1 4.500l-3.500-2.800z" fill="#1fae82" /><path d="M8.500 14.500l6.500 5" stroke="#e23a40" stroke-width="1.6" fill="none" /><path d="M17.500 21.500l-4.800-.5l2.800-3.800z" fill="#e23a40" /></svg>
<div style="left:1178px;top:72px;width:1px;height:31.5px;background:#c9c9c9;"></div>
<svg style="left:1186.6px;top:75.0px" width="24" height="24" viewBox="0 0 24 24"><path d="M4.500 22V11.500h15V22" stroke="#bdbdbd" stroke-width="1.7" fill="#f3f5f6" /><path d="M6 5h12" stroke="#8fbdec" stroke-width="1.4" fill="none" /><path d="M4 5l3.500-2.500v5zM20 5l-3.500-2.500v5z" fill="#8fbdec" /></svg>
<svg style="left:1220.0px;top:75.0px" width="24" height="24" viewBox="0 0 24 24"><path d="M22 4.500H11.500v15H22" stroke="#bdbdbd" stroke-width="1.7" fill="#f3f5f6" /><path d="M5 6v12" stroke="#8fbdec" stroke-width="1.4" fill="none" /><path d="M5 4l-2.500 3.500h5zM5 20l-2.500-3.500h5z" fill="#8fbdec" /></svg>
<svg style="left:1252.6px;top:94px" width="10" height="6"><path d="M0.500 0.500h9L5 5.500z" fill="#111"/></svg>
<div style="left:2px;top:107px;width:34.5px;height:34px;background:#d5e6f7;border:1px solid #c2dcf3;"></div>
<div style="left:7px;top:112px;width:24px;height:24px;background:#c9e4f9;"></div>
<svg style="left:7.0px;top:112.0px" width="24" height="24" viewBox="0 0 24 24"><path d="M3.500 8h7M7 4.500v7M13.500 8h7M17 4.500v7M3.500 17.500h7M7 14v7M13.500 17.500h7M17 14v7" stroke="#666" stroke-width="1.5" fill="none" /></svg>
<div style="left:41px;top:112px;width:24px;height:24px;background:#c3e3fa;"></div>
<svg style="left:41.0px;top:112.0px" width="24" height="24" viewBox="0 0 24 24"><circle cx="12" cy="12" r="9.6" stroke="#e8452c" stroke-width="2.2" fill="none"/><circle cx="12" cy="12" r="9.600" stroke="#f6c8a0" stroke-width="0.9" fill="none" stroke-dasharray="2.500 5"/><path d="M5.500 12h13M12 5.500v13" stroke="#3a3a3a" stroke-width="3" fill="none" /></svg>
<div style="left:71.5px;top:108.5px;width:1px;height:31.5px;background:#c9c9c9;"></div>
<div style="left:80px;top:112px;width:24px;height:24px;background:#ccfbd0;"></div>
<svg style="left:80.0px;top:112.0px" width="24" height="24" viewBox="0 0 24 24"><circle cx="7.5" cy="18.5" r="4.3" stroke="#333" stroke-width="1.6" fill="none"/><circle cx="7.5" cy="18.5" r="1" stroke="#333" stroke-width="0" fill="#333"/><path d="M8 13.500q1.500-7 12-8.500" stroke="#333" stroke-width="1.7" fill="none" /><path d="M16 1.500l5 3.500l-4 4" stroke="#333" stroke-width="1.7" fill="none" /></svg>
<div style="left:114px;top:112px;width:24px;height:24px;background:#ccfbd0;"></div>
<svg style="left:114.0px;top:112.0px" width="24" height="24" viewBox="0 0 24 24"><path d="M12.500 17.500a7.300 7.300 0 1 1 5.500-7" stroke="#444" stroke-width="1.7" fill="none" /><circle cx="10.7" cy="10.5" r="1.3" stroke="#333" stroke-width="0" fill="#333"/><path d="M13.8 18.5H22.2M18 14.3V22.7" stroke="#1a6ae0" stroke-width="2.9" fill="none" /></svg>
<div style="left:148px;top:112px;width:24px;height:24px;background:#ccfbd0;"></div>
<svg style="left:148.0px;top:112.0px" width="24" height="24" viewBox="0 0 24 24"><path d="M6.500 17.500L18 5.500" stroke="#1a6ae0" stroke-width="3" fill="none" /><path d="M15.500 1.500h5v5h-5zM2 16h5.500v5.500H2z" stroke="#555" stroke-width="1.4" fill="#ccfbd0" /><circle cx="18" cy="4" r="0.7" stroke="#555" stroke-width="0" fill="#555"/><circle cx="4.7" cy="18.7" r="0.7" stroke="#555" stroke-width="0" fill="#555"/><path d="M14.3 18.5H22.7M18.5 14.3V22.7" stroke="#1a6ae0" stroke-width="2.9" fill="none" /></svg>
<div style="left:179.3px;top:108.5px;width:1px;height:31.5px;background:#c9c9c9;"></div>
<div style="left:187px;top:112px;width:24px;height:24px;background:#fbd9f0;"></div>
<svg style="left:187.0px;top:112.0px" width="24" height="24" viewBox="0 0 24 24"><path d="M4.500 14.500V3.500" stroke="#1a6ae0" stroke-width="1.7" fill="none" /><path d="M4.500 1l2.500 4h-5z" fill="#1a6ae0" /><path d="M4.500 14.500l5.500-6.500" stroke="#1fae82" stroke-width="1.5" fill="none" /><path d="M12.500 5.500l-1.200 4.500l-3.500-2.800z" fill="#1fae82" /><path d="M4.500 14.500l6 5" stroke="#e23a40" stroke-width="1.6" fill="none" /><path d="M13 21.500l-4.800-.5l2.800-3.800z" fill="#e23a40" /><path d="M14.3 18.5H22.7M18.5 14.3V22.7" stroke="#1a6ae0" stroke-width="2.9" fill="none" /></svg>
<div style="left:222px;top:112px;width:24px;height:24px;background:#fbd9f0;"></div>
<svg style="left:222.0px;top:112.0px" width="24" height="24" viewBox="0 0 24 24"><path d="M7 2.500h15.500l-5 4.500H2z" stroke="#5c5c5c" stroke-width="1.5" fill="#fafafa" /><path d="M7 8.500h15.500l-5 4.500H2z" stroke="#5c5c5c" stroke-width="1.5" fill="#fafafa" /><path d="M7 15h15.500l-5 5H2z" stroke="#5c5c5c" stroke-width="1.5" fill="#cfcfcf" /></svg>
<div style="left:256px;top:112px;width:24px;height:24px;background:#fbd9f0;"></div>
<svg style="left:256.0px;top:112.0px" width="24" height="24" viewBox="0 0 24 24"><path d="M3.500 21.500v-7h7.500v-9h9" stroke="#555" stroke-width="1.9" fill="none" /></svg>
<div style="left:290px;top:112px;width:24px;height:24px;background:#fbd9f0;"></div>
<svg style="left:290.0px;top:112.0px" width="24" height="24" viewBox="0 0 24 24"><path d="M1.500 18l5-4.500M12 9l5-4.500" stroke="#666" stroke-width="1.6" fill="none" /><path d="M7.500 12.500l11 4.500M11 17.500l6-6.500" stroke="#555" stroke-width="1.5" fill="none" /><circle cx="19.5" cy="9.5" r="2" stroke="#555" stroke-width="1.3" fill="none"/><circle cx="20" cy="18.5" r="2" stroke="#555" stroke-width="1.3" fill="none"/></svg>
<svg style="left:322px;top:131px" width="10" height="6"><path d="M0.500 0.500h9L5 5.500z" fill="#111"/></svg>
<div style="left:336px;top:106px;width:1px;height:36px;background:#d4d4d4;"></div>
<svg style="left:340px;top:108px" width="2" height="32"><path d="M1 0V32" stroke="#c4c4c4" stroke-width="1.400" stroke-dasharray="1 2"/></svg>
<span class="t " style="left:346.50px;top:117.00px;font-size:16.5px;color:#111;letter-spacing:0.552px;">Move</span>
<div style="left:395.3px;top:111.5px;width:25.5px;height:26px;background:#e1e1e1;border:1px solid #adadad;"></div>
<svg style="left:401.500px;top:120.500px" width="14" height="8"><path d="M1.500 1l5.500 5.500l5.500-5.500" stroke="#555" fill="none" stroke-width="1.1"/></svg>
<svg style="left:427.0px;top:112.0px" width="24" height="24" viewBox="0 0 24 24"><circle cx="12" cy="12" r="10.8" stroke="#444" stroke-width="0" fill="#4a4a4a"/><text x="3" y="16.7" font-size="11.5" fill="#fff" font-family="Liberation Sans, sans-serif" font-weight="bold" textLength="18" lengthAdjust="spacingAndGlyphs">OK</text></svg>
<svg style="left:459.4px;top:131px" width="10" height="6"><path d="M0.500 0.500h9L5 5.500z" fill="#111"/></svg>
<div style="left:472.5px;top:106px;width:1px;height:36px;background:#d4d4d4;"></div>
<svg style="left:476px;top:108px" width="2" height="32"><path d="M1 0V32" stroke="#c4c4c4" stroke-width="1.400" stroke-dasharray="1 2"/></svg>
<svg style="left:480.5px;top:112.0px" width="24" height="24" viewBox="0 0 24 24"><circle cx="12" cy="15.5" r="5" stroke="#666" stroke-width="1.5" fill="none"/><circle cx="12" cy="15.5" r="1.1" stroke="#666" stroke-width="0" fill="#666"/></svg>
<svg style="left:516.6px;top:112.0px" width="24" height="24" viewBox="0 0 24 24"><circle cx="6" cy="18" r="4.8" stroke="#666" stroke-width="1.5" fill="none"/><circle cx="6" cy="18" r="1.1" stroke="#666" stroke-width="0" fill="#666"/><text x="8.5" y="9.5" font-size="10.5" fill="#5e5e5e" font-family="Liberation Sans, sans-serif" font-weight="bold" textLength="15.500" lengthAdjust="spacingAndGlyphs">123</text></svg>
<svg style="left:553.0px;top:112.0px" width="24" height="24" viewBox="0 0 24 24"><circle cx="11.5" cy="9" r="4" stroke="#666" stroke-width="1.5" fill="none"/><circle cx="11.5" cy="9" r="0.9" stroke="#666" stroke-width="0" fill="#666"/><path d="M2 15h19" stroke="#666" stroke-width="2" fill="none" /><path d="M5 16l3.500 5M9.500 16l3.500 5M14 16l3.500 5M18.500 16l3 4.500" stroke="#777" stroke-width="1.4" fill="none" /></svg>
<svg style="left:586.8px;top:112.0px" width="24" height="24" viewBox="0 0 24 24"><text x="0.5" y="9.5" font-size="10.5" fill="#5e5e5e" font-family="Liberation Sans, sans-serif" font-weight="bold" textLength="15.500" lengthAdjust="spacingAndGlyphs">123</text><path d="M1 23.500L22 9" stroke="#1a6ae0" stroke-width="2.2" fill="none" /></svg>
<svg style="left:619.0px;top:112.0px" width="24" height="24" viewBox="0 0 24 24"><path d="M4.500 11h11M4.500 22h11" stroke="#666" stroke-width="2.4" fill="none" /><path d="M10 11v11" stroke="#666" stroke-width="3" fill="none" /><text x="11.5" y="8.5" font-size="10.5" fill="#5e5e5e" font-family="Liberation Sans, sans-serif" font-weight="bold" textLength="15.500" lengthAdjust="spacingAndGlyphs">123</text></svg>
<svg style="left:655.6px;top:112.0px" width="24" height="24" viewBox="0 0 24 24"><path d="M2 11h12" stroke="#666" stroke-width="2.2" fill="none" /><path d="M17 11l-5.500-4.500v9z" fill="#666" /><path d="M20.500 2.500v18" stroke="#1a6ae0" stroke-width="2.8" fill="none" /></svg>
<svg style="left:691.0px;top:112.0px" width="24" height="24" viewBox="0 0 24 24"><path d="M1.500 21L22.500 6" stroke="#1a6ae0" stroke-width="2" fill="none" /><path d="M8 11.500h7v7" stroke="#e23a40" stroke-width="1.7" fill="none" /></svg>
<svg style="left:722.5px;top:131px" width="10" height="6"><path d="M0.500 0.500h9L5 5.500z" fill="#111"/></svg>
<div style="left:735px;top:106px;width:1px;height:36px;background:#d4d4d4;"></div>
<svg style="left:738.5px;top:108px" width="2" height="32"><path d="M1 0V32" stroke="#c4c4c4" stroke-width="1.400" stroke-dasharray="1 2"/></svg>
<svg style="left:747.6px;top:112.0px" width="24" height="24" viewBox="0 0 24 24"><path d="M12 2.500v7" stroke="#e23a40" stroke-width="1.8" fill="none" /><path d="M6.500 8h11l-5.500 7z" fill="#e23a40" /><path d="M1 17.500h22" stroke="#1a6ae0" stroke-width="2.6" fill="none" /></svg>
<svg style="left:779.7px;top:112.0px" width="24" height="24" viewBox="0 0 24 24"><path d="M12 2v9" stroke="#666" stroke-width="1.9" fill="none" /><path d="M7 9.500h10l-5 6z" fill="#666" /><path d="M2.500 13.500l9.500 8l9.500-8" stroke="#1a6ae0" stroke-width="2.6" fill="none" /></svg>
<svg style="left:814.0px;top:112.0px" width="24" height="24" viewBox="0 0 24 24"><path d="M3 10h18" stroke="#1a6ae0" stroke-width="2.8" fill="none" /><path d="M6.500 23V14M3.500 17l3-3.500l3 3.500M18.500 20.500V14M16 16.500l2.500-3l2.500 3" stroke="#777" stroke-width="1.3" fill="none" /></svg>
<svg style="left:850.0px;top:112.0px" width="24" height="24" viewBox="0 0 24 24"><path d="M2.500 16V5h19.500v11" stroke="#1fae82" stroke-width="2" fill="none" /><path d="M2 17.300h20.500" stroke="#1a6ae0" stroke-width="4.2" fill="none" /><path d="M3.500 12.500l5.500 4.900l-5.500 5M20.500 12.500l-5.500 4.900l5.500 5" stroke="#fbc11a" stroke-width="2.2" fill="none" /></svg>
<svg style="left:883.5px;top:112.0px" width="24" height="24" viewBox="0 0 24 24"><path d="M3 13.500h20" stroke="#1a6ae0" stroke-width="2.6" fill="none" /><path d="M3 2v11.500M3 2L23 23V13.500" stroke="#1fae82" stroke-width="2" fill="none" /></svg>
<svg style="left:917.8px;top:112.0px" width="24" height="24" viewBox="0 0 24 24"><path d="M2.200 14.800h20.400" stroke="#1a6ae0" stroke-width="2.4" fill="none" /><path d="M3 2.200v12M3 2.200l9 12.600l4 7l6.500-7" stroke="#e23a40" stroke-width="1.8" fill="none" /><path d="M3 2.200l9 12.600" stroke="#f3b04a" stroke-width="0.7" fill="none" stroke-dasharray="2 2"/></svg>
<svg style="left:951.4px;top:112.0px" width="24" height="24" viewBox="0 0 24 24"><path d="M2.500 8l9-5l8 3.500M2.500 8l8 4.500M14 7l6.500 4.500q2 2-2 3.500" stroke="#555" stroke-width="1.6" fill="none" /><path d="M8 6l8 5.500M12 4.500l-2 7M15 9.500l3-2" stroke="#3f8de0" stroke-width="1.3" fill="none" /><path d="M3 14.500h7v7.500H3z" stroke="#555" stroke-width="1.6" fill="none" rx="2"/><path d="M14.500 18l6 2.500l-6 2.500z" stroke="#777" stroke-width="1.2" fill="none" /></svg>
<svg style="left:987.4px;top:112.0px" width="24" height="24" viewBox="0 0 24 24"><path d="M4 14l8 8M12 14l-8 8" stroke="#e23a40" stroke-width="1.9" fill="none" /><path d="M13 8.500h10" stroke="#1a6ae0" stroke-width="2.4" fill="none" /><path d="M13.500 1v6.500M13.500 1l4 6.500M17 9.500v3.500l2 1.500l2-1.500v-3.500" stroke="#e23a40" stroke-width="1.5" fill="none" /></svg>
<svg style="left:1019.5px;top:131px" width="10" height="6"><path d="M0.500 0.500h9L5 5.500z" fill="#111"/></svg>
<div style="left:1032.5px;top:106px;width:1px;height:36px;background:#d4d4d4;"></div>
<svg style="left:1036px;top:108px" width="2" height="32"><path d="M1 0V32" stroke="#c4c4c4" stroke-width="1.400" stroke-dasharray="1 2"/></svg>
<svg style="left:1044.0px;top:112.0px" width="24" height="24" viewBox="0 0 24 24"><g transform="translate(-1,3) scale(0.9,0.9)"><path d="M12 2v9" stroke="#666" stroke-width="1.9" fill="none" /><path d="M7 9.500h10l-5 6z" fill="#666" /><path d="M2.500 13.500l9.500 8l9.500-8" stroke="#1a6ae0" stroke-width="2.8" fill="none" /></g><g transform="translate(20,4.5)"><clipPath id="bc1"><circle cx="0" cy="0" r="4.800"/></clipPath><g clip-path="url(#bc1)" transform="rotate(-40)"><rect x="-6" y="-6" width="12" height="3.400" fill="#e23a40"/><rect x="-6" y="-2.600" width="12" height="2.600" fill="#fbc11a"/><rect x="-6" y="0" width="12" height="2.400" fill="#22aa66"/><rect x="-6" y="2.400" width="12" height="4" fill="#1a6ae0"/></g></g></svg>
<svg style="left:1078.0px;top:112.0px" width="24" height="24" viewBox="0 0 24 24"><g transform="translate(-1.5,2.5) scale(0.9,0.9)"><path d="M3 10h18" stroke="#1a6ae0" stroke-width="2.8" fill="none" /><path d="M6.500 23V14M3.500 17l3-3.500l3 3.500M18.500 20.500V14M16 16.500l2.500-3l2.500 3" stroke="#777" stroke-width="1.3" fill="none" /></g><g transform="translate(20,4.5)"><clipPath id="bc2"><circle cx="0" cy="0" r="4.800"/></clipPath><g clip-path="url(#bc2)" transform="rotate(-40)"><rect x="-6" y="-6" width="12" height="3.400" fill="#e23a40"/><rect x="-6" y="-2.600" width="12" height="2.600" fill="#fbc11a"/><rect x="-6" y="0" width="12" height="2.400" fill="#22aa66"/><rect x="-6" y="2.400" width="12" height="4" fill="#1a6ae0"/></g></g></svg>
<svg style="left:1112.7px;top:112.0px" width="24" height="24" viewBox="0 0 24 24"><g transform="translate(0,2) scale(0.92,0.92)"><path d="M11 5H2.500v11M21.500 11v5" stroke="#1fae82" stroke-width="2" fill="none" /><path d="M2 17.300h20.500" stroke="#1a6ae0" stroke-width="4.2" fill="none" /><path d="M3.500 12.500l5.500 4.900l-5.500 5M20.500 12.500l-5.500 4.900l5.500 5" stroke="#fbc11a" stroke-width="2.2" fill="none" /></g><g transform="translate(20.3,4.5)"><clipPath id="bc3"><circle cx="0" cy="0" r="4.800"/></clipPath><g clip-path="url(#bc3)" transform="rotate(-40)"><rect x="-6" y="-6" width="12" height="3.400" fill="#e23a40"/><rect x="-6" y="-2.600" width="12" height="2.600" fill="#fbc11a"/><rect x="-6" y="0" width="12" height="2.400" fill="#22aa66"/><rect x="-6" y="2.400" width="12" height="4" fill="#1a6ae0"/></g></g></svg>
<svg style="left:1147.0px;top:112.0px" width="24" height="24" viewBox="0 0 24 24"><g transform="translate(0,2) scale(0.92,0.92)"><path d="M3 13.500h20" stroke="#1a6ae0" stroke-width="2.6" fill="none" /><path d="M3 2v11.500M3 2L23 23V13.500" stroke="#1fae82" stroke-width="2" fill="none" /></g><g transform="translate(20.3,4.5)"><clipPath id="bc4"><circle cx="0" cy="0" r="4.800"/></clipPath><g clip-path="url(#bc4)" transform="rotate(-40)"><rect x="-6" y="-6" width="12" height="3.400" fill="#e23a40"/><rect x="-6" y="-2.600" width="12" height="2.600" fill="#fbc11a"/><rect x="-6" y="0" width="12" height="2.400" fill="#22aa66"/><rect x="-6" y="2.400" width="12" height="4" fill="#1a6ae0"/></g></g></svg>
<svg style="left:1180.5px;top:112.0px" width="24" height="24" viewBox="0 0 24 24"><g transform="translate(0,2) scale(0.92,0.92)"><path d="M2.200 14.800h20.400" stroke="#1a6ae0" stroke-width="2.4" fill="none" /><path d="M3 2.200v12M3 2.200l9 12.600l4 7l6.500-7" stroke="#e23a40" stroke-width="1.8" fill="none" /><path d="M3 2.200l9 12.600" stroke="#f3b04a" stroke-width="0.7" fill="none" stroke-dasharray="2 2"/></g><g transform="translate(20.3,4.5)"><clipPath id="bc5"><circle cx="0" cy="0" r="4.800"/></clipPath><g clip-path="url(#bc5)" transform="rotate(-40)"><rect x="-6" y="-6" width="12" height="3.400" fill="#e23a40"/><rect x="-6" y="-2.600" width="12" height="2.600" fill="#fbc11a"/><rect x="-6" y="0" width="12" height="2.400" fill="#22aa66"/><rect x="-6" y="2.400" width="12" height="4" fill="#1a6ae0"/></g></g></svg>
<svg style="left:1215.6px;top:112.0px" width="24" height="24" viewBox="0 0 24 24"><path d="M2 8l8-4.500l6 3M2 8l7 4M13 7l6 4q2 2-2 3.500h-4" stroke="#555" stroke-width="1.6" fill="none" /><path d="M7 6l7 5M11 4.500l-2 6.500M13 9.500l3-2" stroke="#3f8de0" stroke-width="1.3" fill="none" /><text x="4" y="23.5" font-size="13" fill="#444" font-family="Liberation Sans, sans-serif" font-weight="bold">x</text><g transform="translate(20.3,4.5)"><clipPath id="bc6"><circle cx="0" cy="0" r="4.800"/></clipPath><g clip-path="url(#bc6)" transform="rotate(-40)"><rect x="-6" y="-6" width="12" height="3.400" fill="#e23a40"/><rect x="-6" y="-2.600" width="12" height="2.600" fill="#fbc11a"/><rect x="-6" y="0" width="12" height="2.400" fill="#22aa66"/><rect x="-6" y="2.400" width="12" height="4" fill="#1a6ae0"/></g></g></svg>
<svg style="left:1249.6px;top:112.0px" width="24" height="24" viewBox="0 0 24 24"><path d="M2 8l8-4.500l6 3M2 8l7 4M13 7l6 4q2 2-2 3.500h-4" stroke="#555" stroke-width="1.6" fill="none" /><path d="M7 6l7 5M11 4.500l-2 6.500M13 9.500l3-2" stroke="#3f8de0" stroke-width="1.3" fill="none" /><text x="4" y="22" font-size="13" fill="#444" font-family="Liberation Sans, sans-serif" font-weight="bold">y</text><g transform="translate(20.3,4.5)"><clipPath id="bc7"><circle cx="0" cy="0" r="4.800"/></clipPath><g clip-path="url(#bc7)" transform="rotate(-40)"><rect x="-6" y="-6" width="12" height="3.400" fill="#e23a40"/><rect x="-6" y="-2.600" width="12" height="2.600" fill="#fbc11a"/><rect x="-6" y="0" width="12" height="2.400" fill="#22aa66"/><rect x="-6" y="2.400" width="12" height="4" fill="#1a6ae0"/></g></g></svg>
<svg style="left:1281.6px;top:131px" width="10" height="6"><path d="M0.500 0.500h9L5 5.500z" fill="#111"/></svg>
<svg style="left:0;top:144px" width="32" height="2"><path d="M0 1H31" stroke="#b9b9b9" stroke-width="1.400" stroke-dasharray="1 2"/></svg>
<svg style="left:2.0px;top:153.0px" width="24" height="24" viewBox="0 0 24 24"><path d="M0 6h12.500v12.500h-12.500z" fill="#1a6ae0" /><circle cx="17.2" cy="7" r="6.3" stroke="#e23a40" stroke-width="0" fill="#e23b4a"/><path d="M11.800 10.500l7.500 13.500H4.500z" fill="#1fae82" /><path d="M8.500 15l3.300-4.500l1.700 3" stroke="#fff" stroke-width="1" fill="none" /><path d="M17.0 20.5H24.0M20.5 17.0V24.0" stroke="#1a6ae0" stroke-width="2.6" fill="none" /></svg>
<svg style="left:2.0px;top:188.6px" width="24" height="24" viewBox="0 0 24 24"><path d="M2.500 4v15.500h14" stroke="#777" stroke-width="1.4" fill="#f4f4f4" /><path d="M2.500 3.500h19" stroke="#555" stroke-width="2.6" fill="none" /><text x="4" y="17" font-size="11.5" fill="#666" font-family="Liberation Sans, sans-serif" >ab</text><path d="M16.5 18.5H23.5M20 15.0V22.0" stroke="#1a6ae0" stroke-width="2.6" fill="none" /></svg>
<svg style="left:2.0px;top:222.0px" width="24" height="24" viewBox="0 0 24 24"><rect x="0" y="0" width="24" height="24" fill="#f1f4f8" /><path d="M17.500 3l4 4L8 20.500L3.500 21.500l1-4.500z" stroke="#5c5c5c" stroke-width="1.5" fill="#666" /><path d="M2.500 22.500l1-4.500l3.500 3.500z" fill="#444" /></svg>
<div style="left:1px;top:252.5px;width:29px;height:1px;background:#c9c9c9;"></div>
<svg style="left:2.0px;top:260.8px" width="24" height="24" viewBox="0 0 24 24"><rect x="0" y="0" width="24" height="24" fill="#f1f4f8" /><path d="M2.500 6.500h19v11h-19z" stroke="#5c5c5c" stroke-width="1.7" fill="none" /><path d="M2.500 6.500l6 5.500l-6 5.500M21.500 6.500l-6 5.500l6 5.500M8.500 12h7" stroke="#5c5c5c" stroke-width="1.3" fill="none" /></svg>
<svg style="left:2.0px;top:294.5px" width="24" height="24" viewBox="0 0 24 24"><rect x="0" y="0" width="24" height="24" fill="#f6f8fa" /><path d="M3.500 11.500L12 4l8.500 7.500M5.500 11v9.500M18.500 11v9.500M2.500 20.500h19M5.500 11.500h13" stroke="#5c5c5c" stroke-width="1.5" fill="none" /></svg>
<svg style="left:2.0px;top:329.0px" width="24" height="24" viewBox="0 0 24 24"><rect x="0" y="0" width="24" height="24" fill="#f6f8fa" /><path d="M2.500 10.500l4.500-5.500h10l4.500 5.500z" stroke="#5c5c5c" stroke-width="1.5" fill="#ddd" /><path d="M3.500 10.500v10.500h17V10.500" stroke="#5c5c5c" stroke-width="1.6" fill="none" /></svg>
<svg style="left:2.0px;top:362.7px" width="24" height="24" viewBox="0 0 24 24"><rect x="0" y="0" width="24" height="24" fill="#f6f8fa" /><path d="M2.500 10.500l9-5l10 3.500v7l-9 5.500l-10-4z" stroke="#5c5c5c" stroke-width="1.4" fill="none" /><path d="M2.500 10.500l10 4l9-5.500M12.500 14.500v7M11.500 5.500l-3 13" stroke="#5c5c5c" stroke-width="1.1" fill="none" /><path d="M8 18l8-5" stroke="#5c5c5c" stroke-width="0.8" fill="none" stroke-dasharray="1.500 1.500"/></svg>
<div style="left:1px;top:394px;width:29px;height:1px;background:#c9c9c9;"></div>
<svg style="left:2.0px;top:401.6px" width="24" height="24" viewBox="0 0 24 24"><rect x="0" y="0" width="24" height="24" fill="#f6f8fa" /><path d="M4.500 6.500l7-2.500l8 6.500v8.500l-7 2l-8-6z" stroke="#5c5c5c" stroke-width="1.4" fill="none" /><path d="M4.500 6.500l8 6l7-2M12.500 12.500v8.500" stroke="#5c5c5c" stroke-width="1.2" fill="none" /><path d="M1 4l22 17" stroke="#bbb" stroke-width="0.8" fill="none" /></svg>
<svg style="left:2.0px;top:436.4px" width="24" height="24" viewBox="0 0 24 24"><rect x="0" y="0" width="24" height="24" fill="#f6f8fa" /><path d="M4 10.500L12 3.500l8 7M6.500 10v8.500M17.500 10v8.500M6.500 18.500h11M6.500 10.500h11M2.500 22l4-3.500M21.500 22l-4-3.500" stroke="#5c5c5c" stroke-width="1.5" fill="none" /></svg>
<div style="left:1px;top:467.5px;width:29px;height:1px;background:#c9c9c9;"></div>
<svg style="left:2.0px;top:475.6px" width="24" height="24" viewBox="0 0 24 24"><rect x="0" y="0" width="24" height="24" fill="#f1f4f8" /><path d="M3.500 3.500h17v17h-17z" stroke="#5c5c5c" stroke-width="1.5" fill="none" /><path d="M12 5v14M5 12h14M6 6l12 12M18 6L6 18" stroke="#5c5c5c" stroke-width="1.1" fill="none" /><rect x="9" y="9" width="6" height="6" fill="#f1f4f8" /><circle cx="12" cy="12" r="1.2" stroke="#5c5c5c" stroke-width="0" fill="#5c5c5c"/></svg>
<svg style="left:3px;top:508px" width="8" height="10"><path d="M6.500 0.500v9L1 5z" fill="#111"/></svg>
<svg style="left:0;top:522px" width="32" height="2"><path d="M0 1H31" stroke="#b9b9b9" stroke-width="1.400" stroke-dasharray="1 2"/></svg>
<div style="left:0px;top:529px;width:32px;height:33px;background:#d5e6f7;border:1px solid #c2dcf3;"></div>
<svg style="left:2.0px;top:533.5px" width="24" height="24" viewBox="0 0 24 24"><rect x="0" y="0" width="24" height="24" fill="#cdf7d2" /><path d="M3.500 14.500a8.300 8.300 0 1 1 14.500 4.500" stroke="#555" stroke-width="2.4" fill="none" /><path d="M21.500 13v9.500h-9.500z" fill="#555" /></svg>
<svg style="left:2.0px;top:567.4px" width="24" height="24" viewBox="0 0 24 24"><rect x="0" y="0" width="24" height="24" fill="#cdf7d2" /><circle cx="9.5" cy="9.5" r="6.3" stroke="#555" stroke-width="2.5" fill="none"/><path d="M14.500 14.500l7 7" stroke="#555" stroke-width="3.2" fill="none" /></svg>
<svg style="left:2.0px;top:601.4px" width="24" height="24" viewBox="0 0 24 24"><rect x="0" y="0" width="24" height="24" fill="#cdf7d2" /><path d="M2.500 8.500h13v13h-13zM8.500 2.500h13v13h-13zM2.500 8.500l6-6M15.500 8.500l6-6M2.500 21.500l6-6M15.500 21.500l6-6" stroke="#555" stroke-width="1.5" fill="none" /></svg>
<div style="left:1px;top:632.5px;width:29px;height:1px;background:#c9c9c9;"></div>
<svg style="left:2.0px;top:640.0px" width="24" height="24" viewBox="0 0 24 24"><rect x="0" y="0" width="24" height="24" fill="#cdf7d2" /><circle cx="5" cy="5" r="3" stroke="#555" stroke-width="1.2" fill="none"/><circle cx="5" cy="5" r="0.8" stroke="#555" stroke-width="0" fill="#555"/><circle cx="6.5" cy="16" r="3" stroke="#555" stroke-width="1.2" fill="none"/><circle cx="6.5" cy="16" r="0.8" stroke="#555" stroke-width="0" fill="#555"/><path d="M11.500 2h6v6h-6z" stroke="#1a6ae0" stroke-width="1.4" fill="none" /><circle cx="14.5" cy="5" r="1" stroke="#1a6ae0" stroke-width="0" fill="#1a6ae0"/><path d="M14.500 8.500v13l3-3l2 4.500l2-1l-2-4.500h4.500z" stroke="#444" stroke-width="1.3" fill="#fff" /></svg>
<svg style="left:2.0px;top:674.7px" width="24" height="24" viewBox="0 0 24 24"><rect x="0" y="0" width="24" height="24" fill="#cdf7d2" /><path d="M5.500 17.500L16 5" stroke="#1a6ae0" stroke-width="3" fill="none" /><circle cx="4" cy="19" r="2.4" stroke="#555" stroke-width="1.3" fill="#cdf7d2"/><circle cx="17.5" cy="3.5" r="2.4" stroke="#555" stroke-width="1.3" fill="#cdf7d2"/><path d="M14.500 8.500v13l3-3l2 4.500l2-1l-2-4.500h4.500z" stroke="#444" stroke-width="1.3" fill="#fff" /></svg>
<div style="left:1px;top:705.5px;width:29px;height:1px;background:#c9c9c9;"></div>
<svg style="left:2.0px;top:714.8px" width="24" height="24" viewBox="0 0 24 24"><rect x="0" y="0" width="24" height="24" fill="#cdf7d2" /><path d="M20 2v19M2 20H21M17 5h5.500M4.500 17v5.500" stroke="#555" stroke-width="1.6" fill="none" /><path d="M13 5L4.500 19" stroke="#555" stroke-width="1.3" fill="none" stroke-dasharray="2 1.800"/><path d="M12 5h8" stroke="#555" stroke-width="1.6" fill="none" /></svg>
<div style="left:1px;top:744.5px;width:29px;height:1px;background:#c9c9c9;"></div>
<svg style="left:2.0px;top:752.0px" width="24" height="24" viewBox="0 0 24 24"><rect x="0" y="0" width="24" height="24" fill="#cdf7d2" /><text x="7" y="12.5" font-size="12.5" fill="#555" font-family="Liberation Sans, sans-serif" font-weight="bold" textLength="16" lengthAdjust="spacingAndGlyphs">2.7</text><path d="M2 18h8M6 14v8" stroke="#555" stroke-width="1.6" fill="none" /></svg>
<svg style="left:3px;top:784.500px" width="8" height="10"><path d="M6.500 0.500v9L1 5z" fill="#111"/></svg>
<div style="left:2259px;top:143px;width:1px;height:1053px;background:#d9d9d9;"></div>
<svg style="left:2262px;top:144px" width="29" height="2"><path d="M0 1H29" stroke="#b9b9b9" stroke-width="1.400" stroke-dasharray="1 2"/></svg>
<svg style="left:2265.4px;top:153.5px" width="24" height="24" viewBox="0 0 24 24"><path d="M6.500 17L17.500 6.500" stroke="#666" stroke-width="1.4" fill="none" /><circle cx="4.5" cy="19" r="3" stroke="#666" stroke-width="1.3" fill="none"/><circle cx="19" cy="5" r="3" stroke="#666" stroke-width="1.3" fill="none"/><circle cx="4.5" cy="19" r="0.7" stroke="#666" stroke-width="0" fill="#666"/><circle cx="19" cy="5" r="0.7" stroke="#666" stroke-width="0" fill="#666"/></svg>
<svg style="left:2265.4px;top:187.0px" width="24" height="24" viewBox="0 0 24 24"><path d="M4 4.500h16M4 19.500h16" stroke="#555" stroke-width="2.6" fill="none" /><path d="M12 4.500v15" stroke="#555" stroke-width="3.2" fill="none" /></svg>
<svg style="left:2265.4px;top:222.0px" width="24" height="24" viewBox="0 0 24 24"><path d="M2.500 3.500h8" stroke="#555" stroke-width="2.6" fill="none" /><path d="M2.500 3.500V22.500h17v-8" stroke="#777" stroke-width="1.5" fill="#f2f2f2" /><path d="M4.500 8h7l8 7.500l-5 5.500l-2-1.500l-8-4.500z" fill="#1a6ae0" /><circle cx="7.5" cy="11" r="1" stroke="#fff" stroke-width="0" fill="#fff"/><circle cx="17" cy="7.5" r="4.6" stroke="#555" stroke-width="2.4" fill="#fff"/><circle cx="17" cy="7.5" r="6.199999999999999" stroke="#555" stroke-width="2.600" fill="none" stroke-dasharray="2.100 2.280"/></svg>
<div style="left:2261px;top:252.3px;width:30px;height:1px;background:#c9c9c9;"></div>
<svg style="left:2265.4px;top:261.0px" width="24" height="24" viewBox="0 0 24 24"><path d="M4.500 3.500q5 4 8 2t7-2.500l2.500 19M4.500 3.500l4 18.500" stroke="#555" stroke-width="1.7" fill="none" /><path d="M19.500 3l-2 19" stroke="#555" stroke-width="1.2" fill="none" /></svg>
<svg style="left:2265.4px;top:295.0px" width="24" height="24" viewBox="0 0 24 24"><path d="M2.500 2.500h19.500v5.500h-19.500z" fill="#444" /><path d="M6 2.500l3 5M11 2.500l3 5M16 2.500l3 5" stroke="#fff" stroke-width="1.6" fill="none" /><path d="M2.500 10h19.500v11h-19.500z" fill="#444" /><path d="M6.500 13.500h12M6.500 17.500h12" stroke="#fff" stroke-width="1.8" fill="none" /><circle cx="2.5" cy="9" r="1.3" stroke="#444" stroke-width="1" fill="#fff"/></svg>
<div style="left:2260px;top:324.2px;width:31px;height:33.6px;background:#d5e6f7;border:1px solid #c2dcf3;border-right:none;"></div>
<svg style="left:2265.4px;top:329.0px" width="24" height="24" viewBox="0 0 24 24"><path d="M3 3.500l4 4" stroke="#f0a030" stroke-width="1.4" fill="none" /><path d="M4.500 9.500l4.500-1.500l-2-3.500z" fill="#f08a20" /><path d="M7.500 12.500l8-4l7 3v9l-8 3.500l-7-3z" stroke="#999" stroke-width="1.2" fill="#fff" /><path d="M14.500 15.500l8-4v9l-8 3.500z" fill="#555" /><path d="M7.500 12.500l7 3l8-4" stroke="#999" stroke-width="1.1" fill="none" /></svg>
<div style="left:2261px;top:360.5px;width:30px;height:1px;background:#c9c9c9;"></div>
<svg style="left:2265.4px;top:368.6px" width="24" height="24" viewBox="0 0 24 24"><path d="M2.500 3h8" stroke="#555" stroke-width="2.6" fill="none" /><path d="M2.500 5v17.500h19.500v-7l-8 1z" fill="#f2f2f2" /><path d="M3 5.500v16.500h4l0-14z" fill="#1a6ae0" /><path d="M7 8l3 13.500h-3z" fill="#22aa88" /><path d="M5 22l17-6.500v3z" fill="#fbc11a" /><path d="M7 22l15-3.500v4z" fill="#e23a40" /><path d="M6 15l6 5l-5.500 2z" fill="#9fd6a0" /><circle cx="17" cy="7.5" r="4.6" stroke="#555" stroke-width="2.4" fill="#fff"/><circle cx="17" cy="7.5" r="6.199999999999999" stroke="#555" stroke-width="2.600" fill="none" stroke-dasharray="2.100 2.280"/></svg>
<svg style="left:2265.4px;top:402.4px" width="24" height="24" viewBox="0 0 24 24"><path d="M2.500 3h8" stroke="#555" stroke-width="2.6" fill="none" /><path d="M2.500 3.500V22.500h19.500v-8" stroke="#777" stroke-width="1.4" fill="#f2f2f2" /><path d="M3 8q6 12 10 11t6-7" stroke="#1a6ae0" stroke-width="1.9" fill="none" /><path d="M3 16h19" stroke="#777" stroke-width="1.1" fill="none" /><circle cx="17" cy="7.5" r="4.6" stroke="#555" stroke-width="2.4" fill="#fff"/><circle cx="17" cy="7.5" r="6.199999999999999" stroke="#555" stroke-width="2.600" fill="none" stroke-dasharray="2.100 2.280"/></svg>
<div style="left:2261px;top:432.8px;width:30px;height:1px;background:#c9c9c9;"></div>
<svg style="left:2265.4px;top:440.5px" width="24" height="24" viewBox="0 0 24 24"><path d="M12 2v20" stroke="#333" stroke-width="2.4" fill="none" /><path d="M1.500 12h7M22.500 12h-7" stroke="#333" stroke-width="1.5" fill="none" /><path d="M6 8.500l4 3.500l-4 3.500M18 8.500l-4 3.500l4 3.500" stroke="#333" stroke-width="1.5" fill="none" /></svg>
<svg style="left:2265.4px;top:473.0px" width="24" height="24" viewBox="0 0 24 24"><path d="M1.500 6l8 11q4 5 8 1l5-6" stroke="#9ec5ee" stroke-width="1.8" fill="none" /><path d="M1.500 6v10.500h21" stroke="#9ec5ee" stroke-width="1.5" fill="none" /><path d="M17.500 3.500v10M15.500 6l2-2.500l2 2.500M15.500 11.500l2 2.500l2-2.500" stroke="#999" stroke-width="1.1" fill="none" /></svg>
<svg style="left:2265.4px;top:510.6px" width="24" height="24" viewBox="0 0 24 24"><text x="1" y="18" font-size="18" fill="#a9a9a9" font-family="Liberation Sans, sans-serif" textLength="22" lengthAdjust="spacingAndGlyphs">×2</text></svg>
<svg style="left:2265.4px;top:544.0px" width="24" height="24" viewBox="0 0 24 24"><text x="3" y="18.5" font-size="18" fill="#a9a9a9" font-family="Liberation Sans, sans-serif" font-style="italic" textLength="18" lengthAdjust="spacingAndGlyphs">/2</text></svg>
<svg style="left:2266.500px;top:580.500px" width="8" height="10"><path d="M6.500 0.500v9L1 5z" fill="#111"/></svg>
<div style="left:2261px;top:595.8px;width:30px;height:1px;background:#c9c9c9;"></div>
<svg style="left:7px;top:5px" width="24" height="26" viewBox="0 0 24 26"><path d="M12 1.200L21.800 6.900V19.100L12 24.800L2.200 19.100V6.900z" fill="#0b1626" stroke="#1e86e8" stroke-width="1.300"/><text x="7.200" y="17.500" font-size="12.500" font-weight="bold" fill="#2a8cf0" font-family="Liberation Sans, sans-serif">G</text></svg>
<svg style="left:426px;top:160px" width="20" height="20" viewBox="0 0 20 20"><path d="M0.500 3.500h10.500q1 0 1 1v8.500h-11.500z" fill="#1769e0" /><circle cx="14.5" cy="5.5" r="5" stroke="#e23a40" stroke-width="0" fill="#e23b4a"/><path d="M10.500 7.500l7.500 11H3z" fill="#1fae82" /><path d="M7 12.500l3.500-5l2 3" stroke="#fff" stroke-width="1.1" fill="none" /></svg>
<svg style="left:1608.500px;top:178.500px" width="23" height="23" viewBox="0 0 23 23"><path d="M0.500 3.500h10.500q1 0 1 1v8.500h-11.500z" fill="#1769e0" /><circle cx="14.5" cy="5.5" r="5" stroke="#e23a40" stroke-width="0" fill="#e23b4a"/><path d="M10.500 7.500l7.500 11H3z" fill="#1fae82" /><path d="M7 12.500l3.500-5l2 3" stroke="#fff" stroke-width="1.1" fill="none" /><circle cx="15.5" cy="15.5" r="3.2" stroke="#333" stroke-width="2.4" fill="#f7f7f5"/><circle cx="15.500" cy="15.500" r="5" stroke="#333" stroke-width="2.200" fill="none" stroke-dasharray="1.800 2.130"/></svg>
<svg style="left:1711px;top:177.500px" width="22" height="21" viewBox="0 0 22 21"><rect x="1" y="1" width="19.800" height="19" fill="none" stroke="#777" stroke-width="1.100" stroke-dasharray="3 1.500"/><g fill="#e4e7ea" stroke="#9a9a9a" stroke-width="1"><rect x="4" y="3.500" width="5.500" height="5.500"/><rect x="11.500" y="3.500" width="6" height="5.500"/><rect x="4" y="11.500" width="5.500" height="5.500"/><rect x="11.500" y="11.500" width="6" height="5.500"/></g></svg>
<svg style="left:1830px;top:176.500px" width="22" height="22" viewBox="0 0 22 22"><path d="M12.500 1.500l7-1q1.800 0 1.800 1.800l-.8 7L9.500 21.500L0.500 13z" fill="#636363"/><circle cx="17.300" cy="4.500" r="1.700" fill="#f7f7f5"/></svg>
<svg style="left:1914px;top:178.500px" width="20" height="20" viewBox="0 0 20 20"><defs><clipPath id="ctc"><rect x="0" y="0" width="20" height="20"/></clipPath></defs><g clip-path="url(#ctc)"><rect width="20" height="20" fill="#f7d84a"/><path d="M0 0h11L0 11z" fill="#3f86e0"/><path d="M11 0h5L0 16v-5z" fill="#7db8e8"/><path d="M16 0h4v1L0 20v-4z" fill="#5fc2b0"/><path d="M20 9v5l-6 6h-5z" fill="#f6a53a"/><path d="M20 14v6h-6z" fill="#e8433a"/></g><rect x="0.500" y="0.500" width="19" height="19" fill="none" stroke="#9a9a9a" stroke-width="0.800"/></svg>
<svg style="left:2019.500px;top:177px" width="23" height="22" viewBox="0 0 23 22"><path d="M1.500 1v12.500h20M1.500 1l7.500 12.500q2 6 6.500 6t6-6" fill="none" stroke="#2a72e0" stroke-width="1.500"/></svg>
<svg style="left:2130.500px;top:176.500px" width="23" height="23" viewBox="0 0 23 23"><rect x="1" y="1" width="20.500" height="20.500" fill="#cfe3f8" stroke="#2a72e0" stroke-width="1.500" stroke-dasharray="4 2"/><rect x="4.500" y="4.500" width="13.500" height="13.500" fill="#d9d9d9" stroke="#666" stroke-width="1.500"/><path d="M20.500 8.500l2 2L13 20.500l-3.500 1l1-3.500z" fill="#2a72e0" stroke="#1a5ac8" stroke-width="0.800"/></svg>
<svg style="left:382.500px;top:893.500px" width="19" height="21" viewBox="0 0 19 21"><rect x="0.500" y="0.500" width="17.500" height="19.500" fill="#fff" stroke="#777" stroke-width="1"/><path d="M2.500 3.500h13.500M2.500 6.500h13.500M2.500 9.500h13.500M2.500 12.500h13.500M2.500 15.500h13.500M2.500 18h13.500" stroke="#999" stroke-width="0.900"/></svg>
<svg style="left:493.500px;top:894px" width="21" height="19" viewBox="0 0 21 19"><path d="M1 1.500h18.500" stroke="#555" stroke-width="2.200"/><path d="M1 2v14.500h18.500V2" fill="#fafafa" stroke="#999" stroke-width="1"/><text x="2.500" y="14" font-size="11.500" fill="#555" font-family="Liberation Sans, sans-serif">ab</text></svg>
<svg style="left:584.500px;top:891.500px" width="18" height="24" viewBox="0 0 18 24"><path d="M1.300 4.500h15v18.500h-15z" fill="#f4f4f4" stroke="#555" stroke-width="1.800"/><path d="M5.500 5.500v-2.500h2q0-2 1.500-2t1.500 2h2v2.500z" fill="#aaa" stroke="#555" stroke-width="1.100"/><path d="M8.500 10.500h5.500M8.500 14.500h5.500M8.500 18.500h5.500" stroke="#777" stroke-width="1.200"/><path d="M3.500 10.500l1.200 1.300l2-2.500M3.500 14.500l1.200 1.300l2-2.500M3.500 18.500l1.200 1.300l2-2.500" stroke="#1fae82" stroke-width="1.100" fill="none"/></svg>
<svg style="left:1620px;top:402px" width="26" height="28" viewBox="0 0 26 28"><path d="M13 2.500q8 9 8 14a8 8 0 0 1-16 0q0-5 8-14z" fill="#2b394c"/><path d="M2 6l21 20" stroke="#fff" stroke-width="4.500"/><path d="M2.500 4.500l21 20" stroke="#2b394c" stroke-width="2.300"/></svg>
<svg style="left:424px;top:206px" width="1167" height="625" viewBox="424 206 1167 625"><path d="M674 732.7H1340.5" stroke="#dcdcdc" stroke-width="1.2" fill="none"/><path d="M731.2 319.5H1283.2" stroke="#27a59a" stroke-width="2.6" fill="none"/><path d="M731.2 319.5H1283.2" stroke="#27a59a" stroke-width="4.600" stroke-dasharray="0.900 10.600" stroke-dashoffset="0.450" stroke-linecap="round" fill="none"/><path d="M731.2 365.5H1283.2" stroke="#5cb7ae" stroke-width="3" fill="none"/><path d="M731.2 365.5H1283.2" stroke="#8ccbc4" stroke-width="1.200" fill="none"/><path d="M731.2 365.5H1283.2" stroke="#27a59a" stroke-width="4.600" stroke-dasharray="0.900 10.600" stroke-dashoffset="0.450" stroke-linecap="round" fill="none"/><path d="M731.2 411.5H1283.2" stroke="#5cb7ae" stroke-width="3" fill="none"/><path d="M731.2 411.5H1283.2" stroke="#8ccbc4" stroke-width="1.200" fill="none"/><path d="M731.2 411.5H1283.2" stroke="#27a59a" stroke-width="4.600" stroke-dasharray="0.900 10.600" stroke-dashoffset="0.450" stroke-linecap="round" fill="none"/><path d="M731.2 457.5H1283.2" stroke="#5cb7ae" stroke-width="3" fill="none"/><path d="M731.2 457.5H1283.2" stroke="#8ccbc4" stroke-width="1.200" fill="none"/><path d="M731.2 457.5H1283.2" stroke="#27a59a" stroke-width="4.600" stroke-dasharray="0.900 10.600" stroke-dashoffset="0.450" stroke-linecap="round" fill="none"/><path d="M731.2 503.5H1283.2" stroke="#5cb7ae" stroke-width="3" fill="none"/><path d="M731.2 503.5H1283.2" stroke="#8ccbc4" stroke-width="1.200" fill="none"/><path d="M731.2 503.5H1283.2" stroke="#27a59a" stroke-width="4.600" stroke-dasharray="0.900 10.600" stroke-dashoffset="0.450" stroke-linecap="round" fill="none"/><path d="M731.2 549.5H1283.2" stroke="#5cb7ae" stroke-width="3" fill="none"/><path d="M731.2 549.5H1283.2" stroke="#8ccbc4" stroke-width="1.200" fill="none"/><path d="M731.2 549.5H1283.2" stroke="#27a59a" stroke-width="4.600" stroke-dasharray="0.900 10.600" stroke-dashoffset="0.450" stroke-linecap="round" fill="none"/><path d="M731.2 595.5H1283.2" stroke="#5cb7ae" stroke-width="3" fill="none"/><path d="M731.2 595.5H1283.2" stroke="#8ccbc4" stroke-width="1.200" fill="none"/><path d="M731.2 595.5H1283.2" stroke="#27a59a" stroke-width="4.600" stroke-dasharray="0.900 10.600" stroke-dashoffset="0.450" stroke-linecap="round" fill="none"/><path d="M731.2 641.5H1283.2" stroke="#5cb7ae" stroke-width="3" fill="none"/><path d="M731.2 641.5H1283.2" stroke="#8ccbc4" stroke-width="1.200" fill="none"/><path d="M731.2 641.5H1283.2" stroke="#27a59a" stroke-width="4.600" stroke-dasharray="0.900 10.600" stroke-dashoffset="0.450" stroke-linecap="round" fill="none"/><path d="M731.2 687.5H1283.2" stroke="#5cb7ae" stroke-width="3" fill="none"/><path d="M731.2 687.5H1283.2" stroke="#8ccbc4" stroke-width="1.200" fill="none"/><path d="M731.2 687.5H1283.2" stroke="#27a59a" stroke-width="4.600" stroke-dasharray="0.900 10.600" stroke-dashoffset="0.450" stroke-linecap="round" fill="none"/><path d="M731.2 733.5H1283.2" stroke="#5cb7ae" stroke-width="3" fill="none"/><path d="M731.2 733.5H1283.2" stroke="#8ccbc4" stroke-width="1.200" fill="none"/><path d="M731.2 733.5H1283.2" stroke="#27a59a" stroke-width="4.600" stroke-dasharray="0.900 10.600" stroke-dashoffset="0.450" stroke-linecap="round" fill="none"/><path d="M731.2 779.5H1283.2" stroke="#5cb7ae" stroke-width="3" fill="none"/><path d="M731.2 779.5H1283.2" stroke="#8ccbc4" stroke-width="1.200" fill="none"/><path d="M731.2 779.5H1283.2" stroke="#27a59a" stroke-width="4.600" stroke-dasharray="0.900 10.600" stroke-dashoffset="0.450" stroke-linecap="round" fill="none"/><path d="M731.2 319.5V365.5" stroke="#27a59a" stroke-width="2.8" fill="none"/><path d="M731.2 365.5V411.5" stroke="#5cb7ae" stroke-width="3" fill="none"/><path d="M731.2 365.5V411.5" stroke="#8ccbc4" stroke-width="1.200" fill="none"/><path d="M731.2 411.5V457.5" stroke="#27a59a" stroke-width="2.8" fill="none"/><path d="M731.2 457.5V503.5" stroke="#27a59a" stroke-width="2.8" fill="none"/><path d="M731.2 503.5V549.5" stroke="#5cb7ae" stroke-width="3" fill="none"/><path d="M731.2 503.5V549.5" stroke="#8ccbc4" stroke-width="1.200" fill="none"/><path d="M731.2 549.5V595.5" stroke="#5cb7ae" stroke-width="3" fill="none"/><path d="M731.2 549.5V595.5" stroke="#8ccbc4" stroke-width="1.200" fill="none"/><path d="M731.2 595.5V641.5" stroke="#27a59a" stroke-width="2.8" fill="none"/><path d="M731.2 641.5V687.5" stroke="#5cb7ae" stroke-width="3" fill="none"/><path d="M731.2 641.5V687.5" stroke="#8ccbc4" stroke-width="1.200" fill="none"/><path d="M731.2 687.5V733.5" stroke="#27a59a" stroke-width="2.8" fill="none"/><path d="M731.2 733.5V779.5" stroke="#5cb7ae" stroke-width="3" fill="none"/><path d="M731.2 733.5V779.5" stroke="#8ccbc4" stroke-width="1.200" fill="none"/><path d="M731.2 319.5V779.5" stroke="#27a59a" stroke-width="4.600" stroke-dasharray="0.900 10.600" stroke-dashoffset="0.450" stroke-linecap="round" fill="none"/><path d="M823.2 319.5V365.5" stroke="#27a59a" stroke-width="2.8" fill="none"/><path d="M823.2 365.5V411.5" stroke="#5cb7ae" stroke-width="3" fill="none"/><path d="M823.2 365.5V411.5" stroke="#8ccbc4" stroke-width="1.200" fill="none"/><path d="M823.2 411.5V457.5" stroke="#27a59a" stroke-width="2.8" fill="none"/><path d="M823.2 457.5V503.5" stroke="#27a59a" stroke-width="2.8" fill="none"/><path d="M823.2 503.5V549.5" stroke="#5cb7ae" stroke-width="3" fill="none"/><path d="M823.2 503.5V549.5" stroke="#8ccbc4" stroke-width="1.200" fill="none"/><path d="M823.2 549.5V595.5" stroke="#5cb7ae" stroke-width="3" fill="none"/><path d="M823.2 549.5V595.5" stroke="#8ccbc4" stroke-width="1.200" fill="none"/><path d="M823.2 595.5V641.5" stroke="#27a59a" stroke-width="2.8" fill="none"/><path d="M823.2 641.5V687.5" stroke="#5cb7ae" stroke-width="3" fill="none"/><path d="M823.2 641.5V687.5" stroke="#8ccbc4" stroke-width="1.200" fill="none"/><path d="M823.2 687.5V733.5" stroke="#27a59a" stroke-width="2.8" fill="none"/><path d="M823.2 733.5V779.5" stroke="#5cb7ae" stroke-width="3" fill="none"/><path d="M823.2 733.5V779.5" stroke="#8ccbc4" stroke-width="1.200" fill="none"/><path d="M823.2 319.5V779.5" stroke="#27a59a" stroke-width="4.600" stroke-dasharray="0.900 10.600" stroke-dashoffset="0.450" stroke-linecap="round" fill="none"/><path d="M915.2 319.5V365.5" stroke="#27a59a" stroke-width="2.8" fill="none"/><path d="M915.2 365.5V411.5" stroke="#27a59a" stroke-width="2.8" fill="none"/><path d="M915.2 411.5V457.5" stroke="#27a59a" stroke-width="2.8" fill="none"/><path d="M915.2 457.5V503.5" stroke="#27a59a" stroke-width="2.8" fill="none"/><path d="M915.2 503.5V549.5" stroke="#5cb7ae" stroke-width="3" fill="none"/><path d="M915.2 503.5V549.5" stroke="#8ccbc4" stroke-width="1.200" fill="none"/><path d="M915.2 549.5V595.5" stroke="#27a59a" stroke-width="2.8" fill="none"/><path d="M915.2 595.5V641.5" stroke="#27a59a" stroke-width="2.8" fill="none"/><path d="M915.2 641.5V687.5" stroke="#5cb7ae" stroke-width="3" fill="none"/><path d="M915.2 641.5V687.5" stroke="#8ccbc4" stroke-width="1.200" fill="none"/><path d="M915.2 687.5V733.5" stroke="#27a59a" stroke-width="2.8" fill="none"/><path d="M915.2 733.5V779.5" stroke="#27a59a" stroke-width="2.8" fill="none"/><path d="M915.2 319.5V779.5" stroke="#27a59a" stroke-width="4.600" stroke-dasharray="0.900 10.600" stroke-dashoffset="0.450" stroke-linecap="round" fill="none"/><path d="M1007.2 319.5V365.5" stroke="#27a59a" stroke-width="2.8" fill="none"/><path d="M1007.2 365.5V411.5" stroke="#27a59a" stroke-width="2.8" fill="none"/><path d="M1007.2 411.5V457.5" stroke="#27a59a" stroke-width="2.8" fill="none"/><path d="M1007.2 457.5V503.5" stroke="#27a59a" stroke-width="2.8" fill="none"/><path d="M1007.2 503.5V549.5" stroke="#5cb7ae" stroke-width="3" fill="none"/><path d="M1007.2 503.5V549.5" stroke="#8ccbc4" stroke-width="1.200" fill="none"/><path d="M1007.2 549.5V595.5" stroke="#27a59a" stroke-width="2.8" fill="none"/><path d="M1007.2 595.5V641.5" stroke="#27a59a" stroke-width="2.8" fill="none"/><path d="M1007.2 641.5V687.5" stroke="#5cb7ae" stroke-width="3" fill="none"/><path d="M1007.2 641.5V687.5" stroke="#8ccbc4" stroke-width="1.200" fill="none"/><path d="M1007.2 687.5V733.5" stroke="#27a59a" stroke-width="2.8" fill="none"/><path d="M1007.2 733.5V779.5" stroke="#27a59a" stroke-width="2.8" fill="none"/><path d="M1007.2 319.5V779.5" stroke="#27a59a" stroke-width="4.600" stroke-dasharray="0.900 10.600" stroke-dashoffset="0.450" stroke-linecap="round" fill="none"/><path d="M1099.2 319.5V365.5" stroke="#27a59a" stroke-width="2.8" fill="none"/><path d="M1099.2 365.5V411.5" stroke="#27a59a" stroke-width="2.8" fill="none"/><path d="M1099.2 411.5V457.5" stroke="#27a59a" stroke-width="2.8" fill="none"/><path d="M1099.2 457.5V503.5" stroke="#5cb7ae" stroke-width="3" fill="none"/><path d="M1099.2 457.5V503.5" stroke="#8ccbc4" stroke-width="1.200" fill="none"/><path d="M1099.2 503.5V549.5" stroke="#5cb7ae" stroke-width="3" fill="none"/><path d="M1099.2 503.5V549.5" stroke="#8ccbc4" stroke-width="1.200" fill="none"/><path d="M1099.2 549.5V595.5" stroke="#27a59a" stroke-width="2.8" fill="none"/><path d="M1099.2 595.5V641.5" stroke="#27a59a" stroke-width="2.8" fill="none"/><path d="M1099.2 641.5V687.5" stroke="#5cb7ae" stroke-width="3" fill="none"/><path d="M1099.2 641.5V687.5" stroke="#8ccbc4" stroke-width="1.200" fill="none"/><path d="M1099.2 687.5V733.5" stroke="#27a59a" stroke-width="2.8" fill="none"/><path d="M1099.2 733.5V779.5" stroke="#27a59a" stroke-width="2.8" fill="none"/><path d="M1099.2 319.5V779.5" stroke="#27a59a" stroke-width="4.600" stroke-dasharray="0.900 10.600" stroke-dashoffset="0.450" stroke-linecap="round" fill="none"/><path d="M1191.2 319.5V365.5" stroke="#5cb7ae" stroke-width="3" fill="none"/><path d="M1191.2 319.5V365.5" stroke="#8ccbc4" stroke-width="1.200" fill="none"/><path d="M1191.2 365.5V411.5" stroke="#27a59a" stroke-width="2.8" fill="none"/><path d="M1191.2 411.5V457.5" stroke="#27a59a" stroke-width="2.8" fill="none"/><path d="M1191.2 457.5V503.5" stroke="#27a59a" stroke-width="2.8" fill="none"/><path d="M1191.2 503.5V549.5" stroke="#5cb7ae" stroke-width="3" fill="none"/><path d="M1191.2 503.5V549.5" stroke="#8ccbc4" stroke-width="1.200" fill="none"/><path d="M1191.2 549.5V595.5" stroke="#27a59a" stroke-width="2.8" fill="none"/><path d="M1191.2 595.5V641.5" stroke="#27a59a" stroke-width="2.8" fill="none"/><path d="M1191.2 641.5V687.5" stroke="#5cb7ae" stroke-width="3" fill="none"/><path d="M1191.2 641.5V687.5" stroke="#8ccbc4" stroke-width="1.200" fill="none"/><path d="M1191.2 687.5V733.5" stroke="#27a59a" stroke-width="2.8" fill="none"/><path d="M1191.2 733.5V779.5" stroke="#5cb7ae" stroke-width="3" fill="none"/><path d="M1191.2 733.5V779.5" stroke="#8ccbc4" stroke-width="1.200" fill="none"/><path d="M1191.2 319.5V779.5" stroke="#27a59a" stroke-width="4.600" stroke-dasharray="0.900 10.600" stroke-dashoffset="0.450" stroke-linecap="round" fill="none"/><path d="M1283.2 319.5V365.5" stroke="#5cb7ae" stroke-width="3" fill="none"/><path d="M1283.2 319.5V365.5" stroke="#8ccbc4" stroke-width="1.200" fill="none"/><path d="M1283.2 365.5V411.5" stroke="#27a59a" stroke-width="2.8" fill="none"/><path d="M1283.2 411.5V457.5" stroke="#27a59a" stroke-width="2.8" fill="none"/><path d="M1283.2 457.5V503.5" stroke="#5cb7ae" stroke-width="3" fill="none"/><path d="M1283.2 457.5V503.5" stroke="#8ccbc4" stroke-width="1.200" fill="none"/><path d="M1283.2 503.5V549.5" stroke="#5cb7ae" stroke-width="3" fill="none"/><path d="M1283.2 503.5V549.5" stroke="#8ccbc4" stroke-width="1.200" fill="none"/><path d="M1283.2 549.5V595.5" stroke="#5cb7ae" stroke-width="3" fill="none"/><path d="M1283.2 549.5V595.5" stroke="#8ccbc4" stroke-width="1.200" fill="none"/><path d="M1283.2 595.5V641.5" stroke="#27a59a" stroke-width="2.8" fill="none"/><path d="M1283.2 641.5V687.5" stroke="#5cb7ae" stroke-width="3" fill="none"/><path d="M1283.2 641.5V687.5" stroke="#8ccbc4" stroke-width="1.200" fill="none"/><path d="M1283.2 687.5V733.5" stroke="#27a59a" stroke-width="2.8" fill="none"/><path d="M1283.2 733.5V779.5" stroke="#27a59a" stroke-width="2.8" fill="none"/><path d="M1283.2 319.5V779.5" stroke="#27a59a" stroke-width="4.600" stroke-dasharray="0.900 10.600" stroke-dashoffset="0.450" stroke-linecap="round" fill="none"/><path d="M731.2 319.5 L742.7 314.6 L754.2 309.9 L765.7 305.4 L777.2 301.2 L788.7 297.1 L800.2 293.2 L811.7 289.6 L823.2 286.2 L834.7 282.9 L846.2 279.9 L857.7 277.1 L869.2 274.5 L880.7 272.1 L892.2 269.9 L903.7 267.9 L915.2 266.2 L926.7 264.6 L938.2 263.2 L949.7 262.1 L961.2 261.2 L972.7 260.4 L984.2 259.9 L995.7 259.6 L1007.2 259.5 L1018.7 259.6 L1030.2 259.9 L1041.7 260.4 L1053.2 261.2 L1064.7 262.1 L1076.2 263.2 L1087.7 264.6 L1099.2 266.2 L1110.7 267.9 L1122.2 269.9 L1133.7 272.1 L1145.2 274.5 L1156.7 277.1 L1168.2 279.9 L1179.7 282.9 L1191.2 286.2 L1202.7 289.6 L1214.2 293.2 L1225.7 297.1 L1237.2 301.2 L1248.7 305.4 L1260.2 309.9 L1271.7 314.6 L1283.2 319.5" stroke="#27a59a" stroke-width="3" fill="none" stroke-linejoin="round"/><ellipse cx="742.7" cy="314.6" rx="2.800" ry="2.300" fill="#27a59a"/><ellipse cx="765.7" cy="305.4" rx="2.800" ry="2.300" fill="#27a59a"/><ellipse cx="788.7" cy="297.1" rx="2.800" ry="2.300" fill="#27a59a"/><ellipse cx="811.7" cy="289.6" rx="2.800" ry="2.300" fill="#27a59a"/><ellipse cx="834.7" cy="282.9" rx="2.800" ry="2.300" fill="#27a59a"/><ellipse cx="857.7" cy="277.1" rx="2.800" ry="2.300" fill="#27a59a"/><ellipse cx="880.7" cy="272.1" rx="2.800" ry="2.300" fill="#27a59a"/><ellipse cx="903.7" cy="267.9" rx="2.800" ry="2.300" fill="#27a59a"/><ellipse cx="926.7" cy="264.6" rx="2.800" ry="2.300" fill="#27a59a"/><ellipse cx="949.7" cy="262.1" rx="2.800" ry="2.300" fill="#27a59a"/><ellipse cx="972.7" cy="260.4" rx="2.800" ry="2.300" fill="#27a59a"/><ellipse cx="995.7" cy="259.6" rx="2.800" ry="2.300" fill="#27a59a"/><ellipse cx="1018.7" cy="259.6" rx="2.800" ry="2.300" fill="#27a59a"/><ellipse cx="1041.7" cy="260.4" rx="2.800" ry="2.300" fill="#27a59a"/><ellipse cx="1064.7" cy="262.1" rx="2.800" ry="2.300" fill="#27a59a"/><ellipse cx="1087.7" cy="264.6" rx="2.800" ry="2.300" fill="#27a59a"/><ellipse cx="1110.7" cy="267.9" rx="2.800" ry="2.300" fill="#27a59a"/><ellipse cx="1133.7" cy="272.1" rx="2.800" ry="2.300" fill="#27a59a"/><ellipse cx="1156.7" cy="277.1" rx="2.800" ry="2.300" fill="#27a59a"/><ellipse cx="1179.7" cy="282.9" rx="2.800" ry="2.300" fill="#27a59a"/><ellipse cx="1202.7" cy="289.6" rx="2.800" ry="2.300" fill="#27a59a"/><ellipse cx="1225.7" cy="297.1" rx="2.800" ry="2.300" fill="#27a59a"/><ellipse cx="1248.7" cy="305.4" rx="2.800" ry="2.300" fill="#27a59a"/><ellipse cx="1271.7" cy="314.6" rx="2.800" ry="2.300" fill="#27a59a"/><path d="M731.2 319.5 L742.7 316.2 L754.2 313.1 L765.7 310.1 L777.2 307.3 L788.7 304.6 L800.2 302.0 L811.7 299.6 L823.2 297.3 L834.7 295.1 L846.2 293.1 L857.7 291.2 L869.2 289.5 L880.7 287.9 L892.2 286.4 L903.7 285.1 L915.2 283.9 L926.7 282.9 L938.2 282.0 L949.7 281.2 L961.2 280.6 L972.7 280.1 L984.2 279.8 L995.7 279.6 L1007.2 279.5 L1018.7 279.6 L1030.2 279.8 L1041.7 280.1 L1053.2 280.6 L1064.7 281.2 L1076.2 282.0 L1087.7 282.9 L1099.2 283.9 L1110.7 285.1 L1122.2 286.4 L1133.7 287.9 L1145.2 289.5 L1156.7 291.2 L1168.2 293.1 L1179.7 295.1 L1191.2 297.3 L1202.7 299.6 L1214.2 302.0 L1225.7 304.6 L1237.2 307.3 L1248.7 310.1 L1260.2 313.1 L1271.7 316.2 L1283.2 319.5" stroke="#27a59a" stroke-width="3" fill="none" stroke-linejoin="round"/><ellipse cx="742.7" cy="316.2" rx="2.800" ry="2.300" fill="#27a59a"/><ellipse cx="765.7" cy="310.1" rx="2.800" ry="2.300" fill="#27a59a"/><ellipse cx="788.7" cy="304.6" rx="2.800" ry="2.300" fill="#27a59a"/><ellipse cx="811.7" cy="299.6" rx="2.800" ry="2.300" fill="#27a59a"/><ellipse cx="834.7" cy="295.1" rx="2.800" ry="2.300" fill="#27a59a"/><ellipse cx="857.7" cy="291.2" rx="2.800" ry="2.300" fill="#27a59a"/><ellipse cx="880.7" cy="287.9" rx="2.800" ry="2.300" fill="#27a59a"/><ellipse cx="903.7" cy="285.1" rx="2.800" ry="2.300" fill="#27a59a"/><ellipse cx="926.7" cy="282.9" rx="2.800" ry="2.300" fill="#27a59a"/><ellipse cx="949.7" cy="281.2" rx="2.800" ry="2.300" fill="#27a59a"/><ellipse cx="972.7" cy="280.1" rx="2.800" ry="2.300" fill="#27a59a"/><ellipse cx="995.7" cy="279.6" rx="2.800" ry="2.300" fill="#27a59a"/><ellipse cx="1018.7" cy="279.6" rx="2.800" ry="2.300" fill="#27a59a"/><ellipse cx="1041.7" cy="280.1" rx="2.800" ry="2.300" fill="#27a59a"/><ellipse cx="1064.7" cy="281.2" rx="2.800" ry="2.300" fill="#27a59a"/><ellipse cx="1087.7" cy="282.9" rx="2.800" ry="2.300" fill="#27a59a"/><ellipse cx="1110.7" cy="285.1" rx="2.800" ry="2.300" fill="#27a59a"/><ellipse cx="1133.7" cy="287.9" rx="2.800" ry="2.300" fill="#27a59a"/><ellipse cx="1156.7" cy="291.2" rx="2.800" ry="2.300" fill="#27a59a"/><ellipse cx="1179.7" cy="295.1" rx="2.800" ry="2.300" fill="#27a59a"/><ellipse cx="1202.7" cy="299.6" rx="2.800" ry="2.300" fill="#27a59a"/><ellipse cx="1225.7" cy="304.6" rx="2.800" ry="2.300" fill="#27a59a"/><ellipse cx="1248.7" cy="310.1" rx="2.800" ry="2.300" fill="#27a59a"/><ellipse cx="1271.7" cy="316.2" rx="2.800" ry="2.300" fill="#27a59a"/><rect x="749.2" y="304.9" width="10" height="10" fill="#fdb80a" /><rect x="772.2" y="296.2" width="10" height="10" fill="#fdb80a" /><rect x="795.2" y="288.2" width="10" height="10" fill="#fdb80a" /><rect x="841.2" y="274.9" width="10" height="10" fill="#fdb80a" /><rect x="864.2" y="269.5" width="10" height="10" fill="#fdb80a" /><rect x="887.2" y="264.9" width="10" height="10" fill="#fdb80a" /><rect x="933.2" y="258.2" width="10" height="10" fill="#fdb80a" /><rect x="956.2" y="256.2" width="10" height="10" fill="#fdb80a" /><rect x="979.2" y="254.9" width="10" height="10" fill="#fdb80a" /><rect x="1025.2" y="254.9" width="10" height="10" fill="#fdb80a" /><rect x="1048.2" y="256.2" width="10" height="10" fill="#fdb80a" /><rect x="1071.2" y="258.2" width="10" height="10" fill="#fdb80a" /><rect x="1117.2" y="264.9" width="10" height="10" fill="#fdb80a" /><rect x="1140.2" y="269.5" width="10" height="10" fill="#fdb80a" /><rect x="1163.2" y="274.9" width="10" height="10" fill="#fdb80a" /><rect x="1209.2" y="288.2" width="10" height="10" fill="#fdb80a" /><rect x="1232.2" y="296.2" width="10" height="10" fill="#fdb80a" /><rect x="1255.2" y="304.9" width="10" height="10" fill="#fdb80a" /><rect x="749.2" y="308.1" width="10" height="10" fill="#fdb80a" /><rect x="772.2" y="302.3" width="10" height="10" fill="#fdb80a" /><rect x="795.2" y="297.0" width="10" height="10" fill="#fdb80a" /><rect x="841.2" y="288.1" width="10" height="10" fill="#fdb80a" /><rect x="864.2" y="284.5" width="10" height="10" fill="#fdb80a" /><rect x="887.2" y="281.4" width="10" height="10" fill="#fdb80a" /><rect x="933.2" y="277.0" width="10" height="10" fill="#fdb80a" /><rect x="956.2" y="275.6" width="10" height="10" fill="#fdb80a" /><rect x="979.2" y="274.8" width="10" height="10" fill="#fdb80a" /><rect x="1025.2" y="274.8" width="10" height="10" fill="#fdb80a" /><rect x="1048.2" y="275.6" width="10" height="10" fill="#fdb80a" /><rect x="1071.2" y="277.0" width="10" height="10" fill="#fdb80a" /><rect x="1117.2" y="281.4" width="10" height="10" fill="#fdb80a" /><rect x="1140.2" y="284.5" width="10" height="10" fill="#fdb80a" /><rect x="1163.2" y="288.1" width="10" height="10" fill="#fdb80a" /><rect x="1209.2" y="297.0" width="10" height="10" fill="#fdb80a" /><rect x="1232.2" y="302.3" width="10" height="10" fill="#fdb80a" /><rect x="1255.2" y="308.1" width="10" height="10" fill="#fdb80a" /><rect x="818.2" y="281.2" width="10" height="43.3" fill="#fdb80a"/><path d="M821.6 315.0L823.2 311.7L824.8 315.0Z" fill="#2f8f9f" opacity="0.95"/><path d="M821.6 306.8L823.2 303.5L824.8 306.8Z" fill="#2f8f9f" opacity="0.83"/><rect x="910.2" y="261.2" width="10" height="63.3" fill="#fdb80a"/><path d="M913.6 315.0L915.2 311.7L916.8 315.0Z" fill="#2f8f9f" opacity="0.95"/><path d="M913.6 306.8L915.2 303.5L916.8 306.8Z" fill="#2f8f9f" opacity="0.83"/><path d="M913.6 298.6L915.2 295.3L916.8 298.6Z" fill="#2f8f9f" opacity="0.71"/><path d="M913.6 290.4L915.2 287.1L916.8 290.4Z" fill="#2f8f9f" opacity="0.59"/><path d="M913.6 282.2L915.2 278.9L916.8 282.2Z" fill="#2f8f9f" opacity="0.47"/><rect x="1002.2" y="252.4" width="10" height="72.1" fill="#fdb80a"/><path d="M1005.6 315.0L1007.2 311.7L1008.8 315.0Z" fill="#2f8f9f" opacity="0.95"/><path d="M1005.6 306.8L1007.2 303.5L1008.8 306.8Z" fill="#2f8f9f" opacity="0.83"/><path d="M1005.6 298.6L1007.2 295.3L1008.8 298.6Z" fill="#2f8f9f" opacity="0.71"/><path d="M1005.6 290.4L1007.2 287.1L1008.8 290.4Z" fill="#2f8f9f" opacity="0.59"/><path d="M1005.6 282.2L1007.2 278.9L1008.8 282.2Z" fill="#2f8f9f" opacity="0.47"/><path d="M1005.6 274.0L1007.2 270.7L1008.8 274.0Z" fill="#2f8f9f" opacity="0.35"/><rect x="1094.2" y="261.2" width="10" height="63.3" fill="#fdb80a"/><path d="M1097.6 315.0L1099.2 311.7L1100.8 315.0Z" fill="#2f8f9f" opacity="0.95"/><path d="M1097.6 306.8L1099.2 303.5L1100.8 306.8Z" fill="#2f8f9f" opacity="0.83"/><path d="M1097.6 298.6L1099.2 295.3L1100.8 298.6Z" fill="#2f8f9f" opacity="0.71"/><path d="M1097.6 290.4L1099.2 287.1L1100.8 290.4Z" fill="#2f8f9f" opacity="0.59"/><path d="M1097.6 282.2L1099.2 278.9L1100.8 282.2Z" fill="#2f8f9f" opacity="0.47"/><rect x="1186.2" y="281.2" width="10" height="43.3" fill="#fdb80a"/><path d="M1189.6 315.0L1191.2 311.7L1192.8 315.0Z" fill="#2f8f9f" opacity="0.95"/><path d="M1189.6 306.8L1191.2 303.5L1192.8 306.8Z" fill="#2f8f9f" opacity="0.83"/><rect x="726.2" y="314.5" width="10" height="10" fill="#fdb80a" /><rect x="818.2" y="314.5" width="10" height="10" fill="#fdb80a" /><rect x="910.2" y="314.5" width="10" height="10" fill="#fdb80a" /><rect x="1002.2" y="314.5" width="10" height="10" fill="#fdb80a" /><rect x="1094.2" y="314.5" width="10" height="10" fill="#fdb80a" /><rect x="1186.2" y="314.5" width="10" height="10" fill="#fdb80a" /><rect x="1278.2" y="314.5" width="10" height="10" fill="#fdb80a" /><rect x="726.2" y="360.5" width="10" height="10" fill="#fdb80a" /><rect x="818.2" y="360.5" width="10" height="10" fill="#fdb80a" /><rect x="910.2" y="360.5" width="10" height="10" fill="#fdb80a" /><rect x="1002.2" y="360.5" width="10" height="10" fill="#fdb80a" /><rect x="1094.2" y="360.5" width="10" height="10" fill="#fdb80a" /><rect x="1186.2" y="360.5" width="10" height="10" fill="#fdb80a" /><rect x="1278.2" y="360.5" width="10" height="10" fill="#fdb80a" /><rect x="726.2" y="406.5" width="10" height="10" fill="#fdb80a" /><rect x="818.2" y="406.5" width="10" height="10" fill="#fdb80a" /><rect x="910.2" y="406.5" width="10" height="10" fill="#fdb80a" /><rect x="1002.2" y="406.5" width="10" height="10" fill="#fdb80a" /><rect x="1094.2" y="406.5" width="10" height="10" fill="#fdb80a" /><rect x="1186.2" y="406.5" width="10" height="10" fill="#fdb80a" /><rect x="1278.2" y="406.5" width="10" height="10" fill="#fdb80a" /><rect x="726.2" y="452.5" width="10" height="10" fill="#fdb80a" /><rect x="818.2" y="452.5" width="10" height="10" fill="#fdb80a" /><rect x="910.2" y="452.5" width="10" height="10" fill="#fdb80a" /><rect x="1002.2" y="452.5" width="10" height="10" fill="#fdb80a" /><rect x="1094.2" y="452.5" width="10" height="10" fill="#fdb80a" /><rect x="1186.2" y="452.5" width="10" height="10" fill="#fdb80a" /><rect x="1278.2" y="452.5" width="10" height="10" fill="#fdb80a" /><rect x="726.2" y="498.5" width="10" height="10" fill="#fdb80a" /><rect x="818.2" y="498.5" width="10" height="10" fill="#fdb80a" /><rect x="910.2" y="498.5" width="10" height="10" fill="#fdb80a" /><rect x="1002.2" y="498.5" width="10" height="10" fill="#fdb80a" /><rect x="1094.2" y="498.5" width="10" height="10" fill="#fdb80a" /><rect x="1186.2" y="498.5" width="10" height="10" fill="#fdb80a" /><rect x="1278.2" y="498.5" width="10" height="10" fill="#fdb80a" /><rect x="726.2" y="544.5" width="10" height="10" fill="#fdb80a" /><rect x="818.2" y="544.5" width="10" height="10" fill="#fdb80a" /><rect x="910.2" y="544.5" width="10" height="10" fill="#fdb80a" /><rect x="1002.2" y="544.5" width="10" height="10" fill="#fdb80a" /><rect x="1094.2" y="544.5" width="10" height="10" fill="#fdb80a" /><rect x="1186.2" y="544.5" width="10" height="10" fill="#fdb80a" /><rect x="1278.2" y="544.5" width="10" height="10" fill="#fdb80a" /><rect x="726.2" y="590.5" width="10" height="10" fill="#fdb80a" /><rect x="818.2" y="590.5" width="10" height="10" fill="#fdb80a" /><rect x="910.2" y="590.5" width="10" height="10" fill="#fdb80a" /><rect x="1002.2" y="590.5" width="10" height="10" fill="#fdb80a" /><rect x="1094.2" y="590.5" width="10" height="10" fill="#fdb80a" /><rect x="1186.2" y="590.5" width="10" height="10" fill="#fdb80a" /><rect x="1278.2" y="590.5" width="10" height="10" fill="#fdb80a" /><rect x="726.2" y="636.5" width="10" height="10" fill="#fdb80a" /><rect x="818.2" y="636.5" width="10" height="10" fill="#fdb80a" /><rect x="910.2" y="636.5" width="10" height="10" fill="#fdb80a" /><rect x="1002.2" y="636.5" width="10" height="10" fill="#fdb80a" /><rect x="1094.2" y="636.5" width="10" height="10" fill="#fdb80a" /><rect x="1186.2" y="636.5" width="10" height="10" fill="#fdb80a" /><rect x="1278.2" y="636.5" width="10" height="10" fill="#fdb80a" /><rect x="726.2" y="682.5" width="10" height="10" fill="#fdb80a" /><rect x="818.2" y="682.5" width="10" height="10" fill="#fdb80a" /><rect x="910.2" y="682.5" width="10" height="10" fill="#fdb80a" /><rect x="1002.2" y="682.5" width="10" height="10" fill="#fdb80a" /><rect x="1094.2" y="682.5" width="10" height="10" fill="#fdb80a" /><rect x="1186.2" y="682.5" width="10" height="10" fill="#fdb80a" /><rect x="1278.2" y="682.5" width="10" height="10" fill="#fdb80a" /><rect x="725.7" y="728.0" width="11" height="11" fill="#fff" stroke="#f4dfa0" stroke-width="1"/><path d="M725.7 739.0h11" stroke="#cfe6b8" stroke-width="1"/><rect x="818.0" y="728.2" width="10.5" height="10.5" fill="#fdb80a" stroke="#b5b83a" stroke-width="1"/><rect x="910.2" y="728.5" width="10" height="10" fill="#fdb80a" /><rect x="1002.0" y="728.2" width="10.5" height="10.5" fill="#fdb80a" stroke="#b5b83a" stroke-width="1"/><rect x="1094.2" y="728.5" width="10" height="10" fill="#fdb80a" /><rect x="1186.2" y="728.5" width="10" height="10" fill="#fdb80a" /><rect x="1277.5" y="727.8" width="11.5" height="11.5" fill="#9dbb5b" /><rect x="726.2" y="774.5" width="10" height="10" fill="#fdb80a" /><rect x="818.2" y="774.5" width="10" height="10" fill="#fdb80a" /><rect x="910.2" y="774.5" width="10" height="10" fill="#fdb80a" /><rect x="1002.2" y="774.5" width="10" height="10" fill="#fdb80a" /><rect x="1094.2" y="774.5" width="10" height="10" fill="#fdb80a" /><rect x="1186.2" y="774.5" width="10" height="10" fill="#fdb80a" /><rect x="1278.2" y="774.5" width="10" height="10" fill="#fdb80a" /><path d="M450.6 762.500V805" stroke="#6a9ad8" stroke-width="1.2" fill="none"/><path d="M450.6 805H493" stroke="#eeb27a" stroke-width="1.4" fill="none"/><text x="450.3" y="755" font-size="15.500" fill="#a9a9a9" font-family="Liberation Sans, sans-serif">z</text><text x="450" y="804.5" font-size="15.500" fill="#a9a9a9" font-family="Liberation Sans, sans-serif">y</text><text x="502" y="805" font-size="15.500" fill="#a9a9a9" font-family="Liberation Sans, sans-serif">x</text></svg>
</body></html>
